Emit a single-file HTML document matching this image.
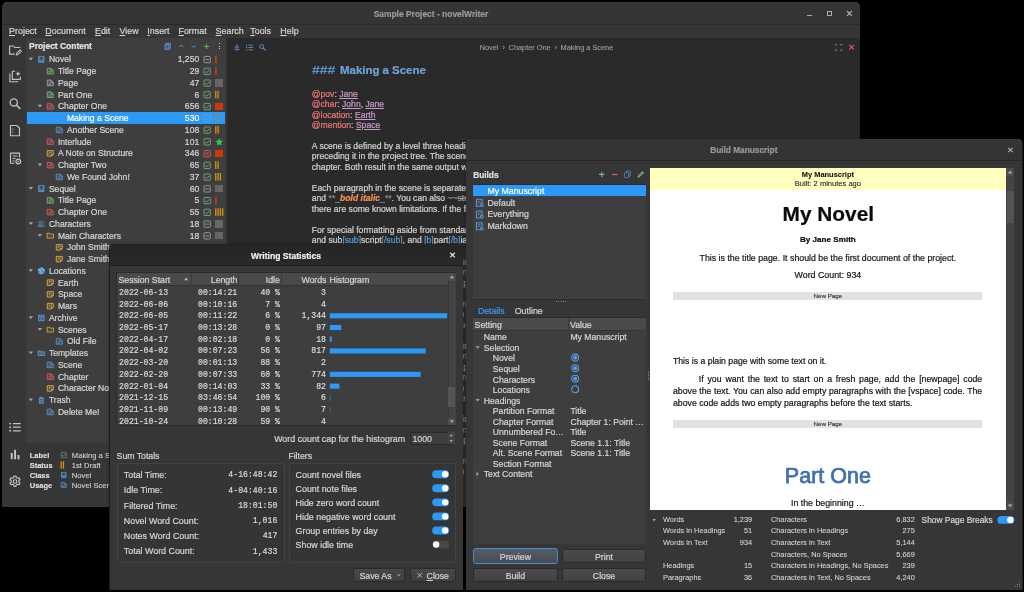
<!DOCTYPE html>
<html><head><meta charset="utf-8"><title>novelWriter</title>
<style>
html,body{margin:0;padding:0;background:#000;}
body{width:1024px;height:592px;overflow:hidden;position:relative;font-family:"Liberation Sans",sans-serif;}
.t{position:absolute;white-space:pre;-webkit-text-stroke:0.2px;}
.g{will-change:transform;}
.r{position:absolute;overflow:hidden;}
.u{text-decoration:underline;}
</style></head><body>
<div class="r" style="left:2px;top:2px;width:858px;height:504.6px;background:#363636;border-radius:5px 5px 0 0;">
<div class="g" style="position:absolute;left:-2px;top:-2px;width:1024px;height:592px;">
<div class="r" style="left:2.00px;top:2.00px;width:858.00px;height:22.30px;background:linear-gradient(#404040 0,#353535 1.300px,#343434 100%);"></div>
<div class="r" style="left:2.00px;top:23.90px;width:858.00px;height:0.90px;background:#2a2a2a;"></div>
<div class="t" style="top:8.10px;line-height:12px;font-size:8.45px;color:#9a9a9a;font-weight:700;letter-spacing:0px;left:231.00px;width:400px;text-align:center;">Sample Project - novelWriter</div>
<div class="r" style="left:807.00px;top:14.60px;width:5.20px;height:1.30px;background:#acacac;"></div>
<div class="r" style="left:826.6px;top:10.6px;width:3.0px;height:3.0px;border:1.5px solid #acacac;"></div>
<svg class="r" style="left:846px;top:10px;" width="8" height="8"><g transform="translate(0.400 0.400) scale(0.6000)"><path d="M1 1l8 8M9 1l-8 8" stroke="#b0b0b0" stroke-width="1.9" fill="none"/></g></svg>
<div class="t" style="top:25.00px;line-height:12px;font-size:8.9px;color:#d6d6d6;letter-spacing:0px;left:9.10px;"><span class="u">P</span>roject</div>
<div class="t" style="top:25.00px;line-height:12px;font-size:8.9px;color:#d6d6d6;letter-spacing:0px;left:45.30px;"><span class="u">D</span>ocument</div>
<div class="t" style="top:25.00px;line-height:12px;font-size:8.9px;color:#d6d6d6;letter-spacing:0px;left:95.00px;"><span class="u">E</span>dit</div>
<div class="t" style="top:25.00px;line-height:12px;font-size:8.9px;color:#d6d6d6;letter-spacing:0px;left:119.50px;"><span class="u">V</span>iew</div>
<div class="t" style="top:25.00px;line-height:12px;font-size:8.9px;color:#d6d6d6;letter-spacing:0px;left:147.30px;"><span class="u">I</span>nsert</div>
<div class="t" style="top:25.00px;line-height:12px;font-size:8.9px;color:#d6d6d6;letter-spacing:0px;left:178.50px;"><span class="u">F</span>ormat</div>
<div class="t" style="top:25.00px;line-height:12px;font-size:8.9px;color:#d6d6d6;letter-spacing:0px;left:215.60px;"><span class="u">S</span>earch</div>
<div class="t" style="top:25.00px;line-height:12px;font-size:8.9px;color:#d6d6d6;letter-spacing:0px;left:250.30px;"><span class="u">T</span>ools</div>
<div class="t" style="top:25.00px;line-height:12px;font-size:8.9px;color:#d6d6d6;letter-spacing:0px;left:280.30px;"><span class="u">H</span>elp</div>
<div class="r" style="left:2.00px;top:37.60px;width:24.40px;height:469.00px;background:#363636;"></div>
<svg class="r" style="left:7px;top:43px;" width="17" height="16"><g transform="translate(0.800 0.000) scale(0.6000)"><path d="M20 8.500V7.500H11.500l-2-2.500H3v13.500h8.500" fill="none" stroke="#c4c4c4" stroke-width="1.900" stroke-linejoin="round"/><path d="M14 20l1-3.200 5.500-5.500 2.200 2.200-5.500 5.500z" fill="none" stroke="#c4c4c4" stroke-width="1.700" stroke-linejoin="round"/></g></svg>
<svg class="r" style="left:7px;top:69px;" width="17" height="16"><g transform="translate(0.800 0.500) scale(0.6000)"><path d="M7.500 3v13.500H21" fill="none" stroke="#c4c4c4" stroke-width="1.900"/><path d="M3.500 6.500V20.500H17.500" fill="none" stroke="#c4c4c4" stroke-width="1.900"/><path d="M7.500 3H12" stroke="#c4c4c4" stroke-width="1.900"/><path d="M21 16.500V12" stroke="#c4c4c4" stroke-width="1.900"/><path d="M17 2.500l1.300 3.200 3.200 1.300-3.200 1.300L17 11.500l-1.300-3.200-3.200-1.300 3.200-1.300z" fill="#c4c4c4"/></g></svg>
<svg class="r" style="left:7px;top:96px;" width="17" height="16"><g transform="translate(0.800 0.400) scale(0.6000)"><circle cx="10" cy="10" r="6" fill="none" stroke="#c4c4c4" stroke-width="2.200"/><path d="M14.500 14.500L21 21" stroke="#c4c4c4" stroke-width="2.600"/></g></svg>
<svg class="r" style="left:7px;top:123px;" width="17" height="16"><g transform="translate(0.800 0.400) scale(0.6000)"><path d="M4.500 3.500h10.500l4.500 4.500v12.500h-15z" fill="none" stroke="#c4c4c4" stroke-width="1.900" stroke-linejoin="round"/><path d="M8.500 9v1.500M8.500 13.500v1.500M8.500 17.500v.5" stroke="#c4c4c4" stroke-width="1.800"/></g></svg>
<svg class="r" style="left:7px;top:151px;" width="17" height="16"><g transform="translate(0.800 0.000) scale(0.6000)"><path d="M19.500 11V3.500h-15v17H11" fill="none" stroke="#c4c4c4" stroke-width="1.900" stroke-linejoin="round"/><path d="M8 8.500h8M8 12.500h5M8 16.500h3" stroke="#c4c4c4" stroke-width="1.700"/><circle cx="17.500" cy="17.500" r="3.900" fill="none" stroke="#c4c4c4" stroke-width="1.900"/><path d="M16 16l3 3M19 16l-3 3" stroke="#c4c4c4" stroke-width="1.400"/></g></svg>
<svg class="r" style="left:7px;top:420px;" width="17" height="16"><g transform="translate(0.800 0.000) scale(0.6000)"><path d="M8.500 6h13M8.500 12h13M8.500 18h13" stroke="#c4c4c4" stroke-width="2.200"/><circle cx="4" cy="6" r="1.600" fill="#c4c4c4"/><circle cx="4" cy="12" r="1.600" fill="#c4c4c4"/><circle cx="4" cy="18" r="1.600" fill="#c4c4c4"/></g></svg>
<svg class="r" style="left:7px;top:447px;" width="17" height="16"><g transform="translate(0.800 0.300) scale(0.6000)"><path d="M5 9.500h3.200V20H5zM10.500 4h3.200v16h-3.200zM16.200 13h3.200v7h-3.200z" fill="#c4c4c4"/></g></svg>
<svg class="r" style="left:7px;top:474px;" width="17" height="16"><g transform="translate(0.800 0.300) scale(0.6000)"><circle cx="12" cy="12" r="3" fill="none" stroke="#c4c4c4" stroke-width="1.900"/><path d="M10.300 2.800h3.400l.5 2.700 1.900 1.100 2.600-.9 1.700 2.900-2.100 1.800v2.200l2.100 1.800-1.700 2.900-2.600-.9-1.900 1.100-.5 2.700h-3.400l-.5-2.700-1.900-1.100-2.600.9-1.700-2.900 2.100-1.800v-2.200L3.600 8.600l1.700-2.900 2.600.9 1.900-1.100z" fill="none" stroke="#c4c4c4" stroke-width="1.900" stroke-linejoin="round"/></g></svg>
<div class="r" style="left:26.40px;top:37.60px;width:199.80px;height:405.60px;background:#3e3e3e;"></div>
<div class="t" style="top:40.30px;line-height:12px;font-size:8.55px;color:#e4e4e4;font-weight:700;letter-spacing:-0.05px;left:29.00px;">Project Content</div>
<svg class="r" style="left:163px;top:41px;" width="10" height="11"><g transform="translate(0.400 1.050) scale(0.3542)"><path d="M8 5.500V3.500h11.500V18c0 1.400-1 2.500-2.500 2.500" fill="none" stroke="#5f9ad6" stroke-width="2.600"/><path d="M4.500 6.500h11v14h-11z" fill="#5f9ad6" fill-opacity=".35" stroke="#5f9ad6" stroke-width="2.600"/></g></svg>
<svg class="r" style="left:178px;top:43px;" width="7" height="7"><g transform="translate(0.200 0.614) scale(0.4143)"><path d="M2 8.500l5-5 5 5" fill="none" stroke="#5f9ad6" stroke-width="2.200"/></g></svg>
<svg class="r" style="left:190px;top:44px;" width="8" height="6"><g transform="translate(0.800 0.014) scale(0.4143)"><path d="M2 3.500l5 5 5-5" fill="none" stroke="#5f9ad6" stroke-width="2.200"/></g></svg>
<svg class="r" style="left:203px;top:43px;" width="8" height="8"><g transform="translate(0.600 0.500) scale(0.4286)"><path d="M7 1v12M1 7h12" stroke="#5fae68" stroke-width="2.700"/></g></svg>
<div class="r" style="left:218.80px;top:43.10px;width:1.30px;height:1.30px;background:#c8c8c8;"></div>
<div class="r" style="left:218.80px;top:45.50px;width:1.30px;height:1.30px;background:#c8c8c8;"></div>
<div class="r" style="left:218.80px;top:47.90px;width:1.30px;height:1.30px;background:#c8c8c8;"></div>
<svg class="r" style="left:28px;top:57px;" width="7" height="5"><g transform="translate(0.700 0.780) scale(0.4400)"><path d="M0 0h10L5 6z" fill="#a4a4a4"/></g></svg>
<svg class="r" style="left:37px;top:55px;" width="10" height="10"><g transform="translate(0.150 0.250) scale(0.3458)"><path d="M4.500 3.500h15v17h-15z" fill="#5b98d4" fill-opacity=".5" stroke="#5b98d4" stroke-width="2.600" stroke-linejoin="round"/><path d="M10 4.500h4.500v7.500H10z" fill="#2c3540"/><path d="M4.500 17h15" stroke="#5b98d4" stroke-width="1.600"/></g></svg>
<div class="t" style="top:53.40px;line-height:12px;font-size:8.6px;color:#d6d6d6;letter-spacing:0px;left:48.90px;">Novel</div>
<div class="t" style="top:53.40px;line-height:12px;font-size:8.6px;color:#d6d6d6;letter-spacing:0px;right:824.80px;">1,250</div>
<svg class="r" style="left:202px;top:55px;" width="11" height="11"><g transform="translate(0.700 0.150) scale(0.3708)"><rect x="3.500" y="3.500" width="17" height="17" rx="2" fill="none" stroke="#a0a0a0" stroke-width="2.400"/><path d="M7 12h10" stroke="#a0a0a0" stroke-width="2.400"/></g></svg>
<svg class="r" style="left:215px;top:55px;" width="3" height="10"><g transform="translate(0.100 0.500) scale(1.0000)"><rect x="0" y="0" width="1.6" height="7.6" fill="#c8400a"/></g></svg>
<svg class="r" style="left:46px;top:67px;" width="10" height="10"><g transform="translate(0.150 0.000) scale(0.3458)"><path d="M3.200 4h11l6.600 6v10H3.200z" fill="#74bf7e" fill-opacity=".22" stroke="#74bf7e" stroke-width="2.400" stroke-linejoin="round"/><path d="M13.800 4.500v6H20.500" fill="none" stroke="#74bf7e" stroke-width="1.900"/><path d="M7.500 13h8M7.500 16.800h6" stroke="#74bf7e" stroke-width="1.700"/></g></svg>
<div class="t" style="top:65.15px;line-height:12px;font-size:8.6px;color:#d6d6d6;letter-spacing:0px;left:57.90px;">Title Page</div>
<div class="t" style="top:65.15px;line-height:12px;font-size:8.6px;color:#d6d6d6;letter-spacing:0px;right:824.80px;">29</div>
<svg class="r" style="left:202px;top:66px;" width="11" height="11"><g transform="translate(0.700 0.900) scale(0.3708)"><rect x="3.500" y="3.500" width="17" height="17" rx="2" fill="none" stroke="#86c88e" stroke-width="1.900"/><path d="M7 12.500l3.500 3.500L17.500 8.500" fill="none" stroke="#86c88e" stroke-width="2"/></g></svg>
<svg class="r" style="left:215px;top:67px;" width="3" height="9"><g transform="translate(0.100 0.250) scale(1.0000)"><rect x="0" y="0" width="1.6" height="7.6" fill="#c8400a"/></g></svg>
<svg class="r" style="left:46px;top:78px;" width="10" height="11"><g transform="translate(0.150 0.750) scale(0.3458)"><path d="M3.200 4h11l6.600 6v10H3.200z" fill="#a8a8a8" fill-opacity=".22" stroke="#a8a8a8" stroke-width="2.400" stroke-linejoin="round"/><path d="M13.800 4.500v6H20.500" fill="none" stroke="#a8a8a8" stroke-width="1.900"/><path d="M7.500 13h8M7.500 16.800h6" stroke="#a8a8a8" stroke-width="1.700"/></g></svg>
<div class="t" style="top:76.90px;line-height:12px;font-size:8.6px;color:#d6d6d6;letter-spacing:0px;left:57.90px;">Page</div>
<div class="t" style="top:76.90px;line-height:12px;font-size:8.6px;color:#d6d6d6;letter-spacing:0px;right:824.80px;">47</div>
<svg class="r" style="left:202px;top:78px;" width="11" height="11"><g transform="translate(0.700 0.650) scale(0.3708)"><rect x="3.500" y="3.500" width="17" height="17" rx="2" fill="none" stroke="#86c88e" stroke-width="1.900"/><path d="M7 12.500l3.500 3.500L17.500 8.500" fill="none" stroke="#86c88e" stroke-width="2"/></g></svg>
<div class="r" style="left:215.10px;top:79.00px;width:8.40px;height:7.60px;background:#666666;"></div>
<svg class="r" style="left:46px;top:90px;" width="10" height="10"><g transform="translate(0.150 0.500) scale(0.3458)"><path d="M3.200 4h11l6.600 6v10H3.200z" fill="#74bf7e" fill-opacity=".22" stroke="#74bf7e" stroke-width="2.400" stroke-linejoin="round"/><path d="M13.800 4.500v6H20.500" fill="none" stroke="#74bf7e" stroke-width="1.900"/><path d="M7.500 13h8M7.500 16.800h6" stroke="#74bf7e" stroke-width="1.700"/></g></svg>
<div class="t" style="top:88.65px;line-height:12px;font-size:8.6px;color:#d6d6d6;letter-spacing:0px;left:57.90px;">Part One</div>
<div class="t" style="top:88.65px;line-height:12px;font-size:8.6px;color:#d6d6d6;letter-spacing:0px;right:824.80px;">6</div>
<svg class="r" style="left:202px;top:90px;" width="11" height="11"><g transform="translate(0.700 0.400) scale(0.3708)"><rect x="3.500" y="3.500" width="17" height="17" rx="2" fill="none" stroke="#86c88e" stroke-width="1.900"/><path d="M7 12.500l3.500 3.500L17.500 8.500" fill="none" stroke="#86c88e" stroke-width="2"/></g></svg>
<svg class="r" style="left:215px;top:90px;" width="3" height="10"><g transform="translate(0.100 0.750) scale(1.0000)"><rect x="0" y="0" width="1.3" height="7.6" fill="#d8920c"/></g></svg>
<svg class="r" style="left:217px;top:90px;" width="3" height="10"><g transform="translate(0.420 0.750) scale(1.0000)"><rect x="0" y="0" width="1.3" height="7.6" fill="#d8920c"/></g></svg>
<svg class="r" style="left:37px;top:104px;" width="7" height="5"><g transform="translate(0.700 0.780) scale(0.4400)"><path d="M0 0h10L5 6z" fill="#a4a4a4"/></g></svg>
<svg class="r" style="left:46px;top:102px;" width="10" height="10"><g transform="translate(0.150 0.250) scale(0.3458)"><path d="M3.200 4h11l6.600 6v10H3.200z" fill="#dd5a64" fill-opacity=".22" stroke="#dd5a64" stroke-width="2.400" stroke-linejoin="round"/><path d="M13.800 4.500v6H20.500" fill="none" stroke="#dd5a64" stroke-width="1.900"/><path d="M7.500 13h8M7.500 16.800h6" stroke="#dd5a64" stroke-width="1.700"/></g></svg>
<div class="t" style="top:100.40px;line-height:12px;font-size:8.6px;color:#d6d6d6;letter-spacing:0px;left:57.90px;">Chapter One</div>
<div class="t" style="top:100.40px;line-height:12px;font-size:8.6px;color:#d6d6d6;letter-spacing:0px;right:824.80px;">656</div>
<svg class="r" style="left:202px;top:102px;" width="11" height="11"><g transform="translate(0.700 0.150) scale(0.3708)"><rect x="3.500" y="3.500" width="17" height="17" rx="2" fill="none" stroke="#86c88e" stroke-width="1.900"/><path d="M7 12.500l3.500 3.500L17.500 8.500" fill="none" stroke="#86c88e" stroke-width="2"/></g></svg>
<div class="r" style="left:215.10px;top:102.50px;width:8.40px;height:7.60px;background:#d23508;"></div>
<div class="r" style="left:26.80px;top:112.45px;width:198.60px;height:11.10px;background:#2c98f7;"></div>
<svg class="r" style="left:55px;top:114px;opacity:.22;" width="10" height="10"><g transform="translate(0.150 0.000) scale(0.3458)"><path d="M3.200 4h11l6.600 6v10H3.200z" fill="#5b98d4" fill-opacity=".22" stroke="#5b98d4" stroke-width="2.400" stroke-linejoin="round"/><path d="M13.800 4.500v6H20.500" fill="none" stroke="#5b98d4" stroke-width="1.900"/><path d="M7.500 13h8M7.500 16.800h6" stroke="#5b98d4" stroke-width="1.700"/></g></svg>
<div class="t" style="top:112.15px;line-height:12px;font-size:8.6px;color:#ffffff;letter-spacing:0px;left:66.90px;">Making a Scene</div>
<div class="t" style="top:112.15px;line-height:12px;font-size:8.6px;color:#ffffff;letter-spacing:0px;right:824.80px;">530</div>
<svg class="r" style="left:202px;top:113px;" width="11" height="11"><g transform="translate(0.700 0.900) scale(0.3708)"><rect x="3.500" y="3.500" width="17" height="17" rx="2" fill="none" stroke="#5fb0c8" stroke-width="1.900"/><path d="M7 12.500l3.500 3.500L17.500 8.500" fill="none" stroke="#5fb0c8" stroke-width="2"/></g></svg>
<svg class="r" style="left:215px;top:114px;" width="3" height="9"><g transform="translate(0.100 0.250) scale(1.0000)"><rect x="0" y="0" width="1.3" height="7.6" fill="#8a8c5a"/></g></svg>
<svg class="r" style="left:217px;top:114px;" width="3" height="9"><g transform="translate(0.420 0.250) scale(1.0000)"><rect x="0" y="0" width="1.3" height="7.6" fill="#8a8c5a"/></g></svg>
<svg class="r" style="left:55px;top:125px;" width="10" height="11"><g transform="translate(0.150 0.750) scale(0.3458)"><path d="M3.200 4h11l6.600 6v10H3.200z" fill="#5b98d4" fill-opacity=".22" stroke="#5b98d4" stroke-width="2.400" stroke-linejoin="round"/><path d="M13.800 4.500v6H20.500" fill="none" stroke="#5b98d4" stroke-width="1.900"/><path d="M7.500 13h8M7.500 16.800h6" stroke="#5b98d4" stroke-width="1.700"/></g></svg>
<div class="t" style="top:123.90px;line-height:12px;font-size:8.6px;color:#d6d6d6;letter-spacing:0px;left:66.90px;">Another Scene</div>
<div class="t" style="top:123.90px;line-height:12px;font-size:8.6px;color:#d6d6d6;letter-spacing:0px;right:824.80px;">108</div>
<svg class="r" style="left:202px;top:125px;" width="11" height="11"><g transform="translate(0.700 0.650) scale(0.3708)"><rect x="3.500" y="3.500" width="17" height="17" rx="2" fill="none" stroke="#86c88e" stroke-width="1.900"/><path d="M7 12.500l3.500 3.500L17.500 8.500" fill="none" stroke="#86c88e" stroke-width="2"/></g></svg>
<svg class="r" style="left:215px;top:126px;" width="3" height="9"><g transform="translate(0.100 0.000) scale(1.0000)"><rect x="0" y="0" width="1.3" height="7.6" fill="#d8920c"/></g></svg>
<svg class="r" style="left:217px;top:126px;" width="3" height="9"><g transform="translate(0.420 0.000) scale(1.0000)"><rect x="0" y="0" width="1.3" height="7.6" fill="#d8920c"/></g></svg>
<svg class="r" style="left:46px;top:137px;" width="10" height="10"><g transform="translate(0.150 0.500) scale(0.3458)"><path d="M3.200 4h11l6.600 6v10H3.200z" fill="#dd5a64" fill-opacity=".22" stroke="#dd5a64" stroke-width="2.400" stroke-linejoin="round"/><path d="M13.800 4.500v6H20.500" fill="none" stroke="#dd5a64" stroke-width="1.900"/><path d="M7.500 13h8M7.500 16.800h6" stroke="#dd5a64" stroke-width="1.700"/></g></svg>
<div class="t" style="top:135.65px;line-height:12px;font-size:8.6px;color:#d6d6d6;letter-spacing:0px;left:57.90px;">Interlude</div>
<div class="t" style="top:135.65px;line-height:12px;font-size:8.6px;color:#d6d6d6;letter-spacing:0px;right:824.80px;">101</div>
<svg class="r" style="left:202px;top:137px;" width="11" height="11"><g transform="translate(0.700 0.400) scale(0.3708)"><rect x="3.500" y="3.500" width="17" height="17" rx="2" fill="none" stroke="#86c88e" stroke-width="1.900"/><path d="M7 12.500l3.500 3.500L17.500 8.500" fill="none" stroke="#86c88e" stroke-width="2"/></g></svg>
<svg class="r" style="left:214px;top:137px;" width="11" height="11"><g transform="translate(0.700 0.450) scale(0.3750)"><path d="M12 1.500l3.200 6.800 7.300.9-5.400 5 1.400 7.300L12 17.900 5.500 21.500l1.400-7.300-5.400-5 7.300-.9z" fill="#3fc04a"/></g></svg>
<svg class="r" style="left:46px;top:149px;" width="10" height="10"><g transform="translate(0.150 0.250) scale(0.3458)"><path d="M3.200 4h17.600v10l-6 6H3.200z" fill="#ecb442" fill-opacity=".14" stroke="#ecb442" stroke-width="2.400" stroke-linejoin="round"/><path d="M20.800 14.500l-5.500 5.500v-5.500z" fill="#ecb442" stroke="#ecb442" stroke-width="1" stroke-linejoin="round"/><path d="M7.300 8.800h9.500M7.300 12.800h5" stroke="#ecb442" stroke-width="1.700"/></g></svg>
<div class="t" style="top:147.40px;line-height:12px;font-size:8.6px;color:#d6d6d6;letter-spacing:0px;left:57.90px;">A Note on Structure</div>
<div class="t" style="top:147.40px;line-height:12px;font-size:8.6px;color:#d6d6d6;letter-spacing:0px;right:824.80px;">346</div>
<svg class="r" style="left:202px;top:149px;" width="11" height="11"><g transform="translate(0.700 0.150) scale(0.3708)"><rect x="3.500" y="3.500" width="17" height="17" rx="2" fill="none" stroke="#e2525c" stroke-width="2.600"/><path d="M8 8l8 8M16 8l-8 8" stroke="#e2525c" stroke-width="2.400"/></g></svg>
<div class="r" style="left:215.10px;top:149.50px;width:8.40px;height:7.60px;background:#d23508;"></div>
<svg class="r" style="left:37px;top:163px;" width="7" height="5"><g transform="translate(0.700 0.530) scale(0.4400)"><path d="M0 0h10L5 6z" fill="#a4a4a4"/></g></svg>
<svg class="r" style="left:46px;top:161px;" width="10" height="10"><g transform="translate(0.150 0.000) scale(0.3458)"><path d="M3.200 4h11l6.600 6v10H3.200z" fill="#dd5a64" fill-opacity=".22" stroke="#dd5a64" stroke-width="2.400" stroke-linejoin="round"/><path d="M13.800 4.500v6H20.500" fill="none" stroke="#dd5a64" stroke-width="1.900"/><path d="M7.500 13h8M7.500 16.800h6" stroke="#dd5a64" stroke-width="1.700"/></g></svg>
<div class="t" style="top:159.15px;line-height:12px;font-size:8.6px;color:#d6d6d6;letter-spacing:0px;left:57.90px;">Chapter Two</div>
<div class="t" style="top:159.15px;line-height:12px;font-size:8.6px;color:#d6d6d6;letter-spacing:0px;right:824.80px;">65</div>
<svg class="r" style="left:202px;top:160px;" width="11" height="11"><g transform="translate(0.700 0.900) scale(0.3708)"><rect x="3.500" y="3.500" width="17" height="17" rx="2" fill="none" stroke="#86c88e" stroke-width="1.900"/><path d="M7 12.500l3.500 3.500L17.500 8.500" fill="none" stroke="#86c88e" stroke-width="2"/></g></svg>
<svg class="r" style="left:215px;top:161px;" width="3" height="9"><g transform="translate(0.100 0.250) scale(1.0000)"><rect x="0" y="0" width="1.3" height="7.6" fill="#d8920c"/></g></svg>
<svg class="r" style="left:217px;top:161px;" width="3" height="9"><g transform="translate(0.420 0.250) scale(1.0000)"><rect x="0" y="0" width="1.3" height="7.6" fill="#d8920c"/></g></svg>
<svg class="r" style="left:55px;top:172px;" width="10" height="11"><g transform="translate(0.150 0.750) scale(0.3458)"><path d="M3.200 4h11l6.600 6v10H3.200z" fill="#5b98d4" fill-opacity=".22" stroke="#5b98d4" stroke-width="2.400" stroke-linejoin="round"/><path d="M13.800 4.500v6H20.500" fill="none" stroke="#5b98d4" stroke-width="1.900"/><path d="M7.500 13h8M7.500 16.800h6" stroke="#5b98d4" stroke-width="1.700"/></g></svg>
<div class="t" style="top:170.90px;line-height:12px;font-size:8.6px;color:#d6d6d6;letter-spacing:0px;left:66.90px;">We Found John!</div>
<div class="t" style="top:170.90px;line-height:12px;font-size:8.6px;color:#d6d6d6;letter-spacing:0px;right:824.80px;">37</div>
<svg class="r" style="left:202px;top:172px;" width="11" height="11"><g transform="translate(0.700 0.650) scale(0.3708)"><rect x="3.500" y="3.500" width="17" height="17" rx="2" fill="none" stroke="#86c88e" stroke-width="1.900"/><path d="M7 12.500l3.500 3.500L17.500 8.500" fill="none" stroke="#86c88e" stroke-width="2"/></g></svg>
<svg class="r" style="left:215px;top:173px;" width="3" height="9"><g transform="translate(0.100 0.000) scale(1.0000)"><rect x="0" y="0" width="1.3" height="7.6" fill="#d8920c"/></g></svg>
<svg class="r" style="left:217px;top:173px;" width="3" height="9"><g transform="translate(0.420 0.000) scale(1.0000)"><rect x="0" y="0" width="1.3" height="7.6" fill="#d8920c"/></g></svg>
<svg class="r" style="left:219px;top:173px;" width="4" height="9"><g transform="translate(0.740 0.000) scale(1.0000)"><rect x="0" y="0" width="1.3" height="7.6" fill="#d8920c"/></g></svg>
<svg class="r" style="left:28px;top:186px;" width="7" height="5"><g transform="translate(0.700 1.030) scale(0.4400)"><path d="M0 0h10L5 6z" fill="#a4a4a4"/></g></svg>
<svg class="r" style="left:37px;top:184px;" width="10" height="10"><g transform="translate(0.150 0.500) scale(0.3458)"><path d="M4.500 3.500h15v17h-15z" fill="#5b98d4" fill-opacity=".5" stroke="#5b98d4" stroke-width="2.600" stroke-linejoin="round"/><path d="M10 4.500h4.500v7.500H10z" fill="#2c3540"/><path d="M4.500 17h15" stroke="#5b98d4" stroke-width="1.600"/></g></svg>
<div class="t" style="top:182.65px;line-height:12px;font-size:8.6px;color:#d6d6d6;letter-spacing:0px;left:48.90px;">Sequel</div>
<div class="t" style="top:182.65px;line-height:12px;font-size:8.6px;color:#d6d6d6;letter-spacing:0px;right:824.80px;">60</div>
<svg class="r" style="left:202px;top:184px;" width="11" height="11"><g transform="translate(0.700 0.400) scale(0.3708)"><rect x="3.500" y="3.500" width="17" height="17" rx="2" fill="none" stroke="#a0a0a0" stroke-width="2.400"/><path d="M7 12h10" stroke="#a0a0a0" stroke-width="2.400"/></g></svg>
<div class="r" style="left:215.10px;top:184.75px;width:8.40px;height:7.60px;background:#666666;"></div>
<svg class="r" style="left:46px;top:196px;" width="10" height="10"><g transform="translate(0.150 0.250) scale(0.3458)"><path d="M3.200 4h11l6.600 6v10H3.200z" fill="#74bf7e" fill-opacity=".22" stroke="#74bf7e" stroke-width="2.400" stroke-linejoin="round"/><path d="M13.800 4.500v6H20.500" fill="none" stroke="#74bf7e" stroke-width="1.900"/><path d="M7.500 13h8M7.500 16.800h6" stroke="#74bf7e" stroke-width="1.700"/></g></svg>
<div class="t" style="top:194.40px;line-height:12px;font-size:8.6px;color:#d6d6d6;letter-spacing:0px;left:57.90px;">Title Page</div>
<div class="t" style="top:194.40px;line-height:12px;font-size:8.6px;color:#d6d6d6;letter-spacing:0px;right:824.80px;">5</div>
<svg class="r" style="left:202px;top:196px;" width="11" height="11"><g transform="translate(0.700 0.150) scale(0.3708)"><rect x="3.500" y="3.500" width="17" height="17" rx="2" fill="none" stroke="#86c88e" stroke-width="1.900"/><path d="M7 12.500l3.500 3.500L17.500 8.500" fill="none" stroke="#86c88e" stroke-width="2"/></g></svg>
<svg class="r" style="left:215px;top:196px;" width="3" height="10"><g transform="translate(0.100 0.500) scale(1.0000)"><rect x="0" y="0" width="1.6" height="7.6" fill="#c8400a"/></g></svg>
<svg class="r" style="left:46px;top:208px;" width="10" height="10"><g transform="translate(0.150 0.000) scale(0.3458)"><path d="M3.200 4h11l6.600 6v10H3.200z" fill="#dd5a64" fill-opacity=".22" stroke="#dd5a64" stroke-width="2.400" stroke-linejoin="round"/><path d="M13.800 4.500v6H20.500" fill="none" stroke="#dd5a64" stroke-width="1.900"/><path d="M7.500 13h8M7.500 16.800h6" stroke="#dd5a64" stroke-width="1.700"/></g></svg>
<div class="t" style="top:206.15px;line-height:12px;font-size:8.6px;color:#d6d6d6;letter-spacing:0px;left:57.90px;">Chapter One</div>
<div class="t" style="top:206.15px;line-height:12px;font-size:8.6px;color:#d6d6d6;letter-spacing:0px;right:824.80px;">55</div>
<svg class="r" style="left:202px;top:207px;" width="11" height="11"><g transform="translate(0.700 0.900) scale(0.3708)"><rect x="3.500" y="3.500" width="17" height="17" rx="2" fill="none" stroke="#86c88e" stroke-width="1.900"/><path d="M7 12.500l3.500 3.500L17.500 8.500" fill="none" stroke="#86c88e" stroke-width="2"/></g></svg>
<svg class="r" style="left:215px;top:208px;" width="3" height="9"><g transform="translate(0.100 0.250) scale(1.0000)"><rect x="0" y="0" width="1.3" height="7.6" fill="#d8920c"/></g></svg>
<svg class="r" style="left:217px;top:208px;" width="3" height="9"><g transform="translate(0.420 0.250) scale(1.0000)"><rect x="0" y="0" width="1.3" height="7.6" fill="#d8920c"/></g></svg>
<svg class="r" style="left:219px;top:208px;" width="4" height="9"><g transform="translate(0.740 0.250) scale(1.0000)"><rect x="0" y="0" width="1.3" height="7.6" fill="#d8920c"/></g></svg>
<svg class="r" style="left:222px;top:208px;" width="3" height="9"><g transform="translate(0.060 0.250) scale(1.0000)"><rect x="0" y="0" width="1.3" height="7.6" fill="#d8920c"/></g></svg>
<svg class="r" style="left:28px;top:222px;" width="7" height="4"><g transform="translate(0.700 0.280) scale(0.4400)"><path d="M0 0h10L5 6z" fill="#a4a4a4"/></g></svg>
<svg class="r" style="left:37px;top:219px;" width="10" height="11"><g transform="translate(0.150 0.750) scale(0.3458)"><circle cx="9" cy="7.500" r="3.300" fill="none" stroke="#5b98d4" stroke-width="2.200"/><path d="M2.200 19.500v-1.500c0-2.600 4.200-4 6.800-4s6.800 1.400 6.800 4v1.500z" fill="#5b98d4" fill-opacity=".3" stroke="#5b98d4" stroke-width="2.200" stroke-linejoin="round"/><path d="M15.500 4.500c1.800 0 3.200 1.400 3.200 3.200s-1.400 3.200-3.200 3.200" fill="none" stroke="#5b98d4" stroke-width="2.200"/><path d="M18.500 14.500c1.800.600 3.300 1.700 3.300 3.500v1.500h-2.500" fill="none" stroke="#5b98d4" stroke-width="2.200"/></g></svg>
<div class="t" style="top:217.90px;line-height:12px;font-size:8.6px;color:#d6d6d6;letter-spacing:0px;left:48.90px;">Characters</div>
<div class="t" style="top:217.90px;line-height:12px;font-size:8.6px;color:#d6d6d6;letter-spacing:0px;right:824.80px;">18</div>
<svg class="r" style="left:202px;top:219px;" width="11" height="11"><g transform="translate(0.700 0.650) scale(0.3708)"><rect x="3.500" y="3.500" width="17" height="17" rx="2" fill="none" stroke="#a0a0a0" stroke-width="2.400"/><path d="M7 12h10" stroke="#a0a0a0" stroke-width="2.400"/></g></svg>
<div class="r" style="left:215.10px;top:220.00px;width:8.40px;height:7.60px;background:#666666;"></div>
<svg class="r" style="left:37px;top:233px;" width="7" height="5"><g transform="translate(0.700 1.030) scale(0.4400)"><path d="M0 0h10L5 6z" fill="#a4a4a4"/></g></svg>
<svg class="r" style="left:46px;top:231px;" width="10" height="10"><g transform="translate(0.150 0.500) scale(0.3458)"><path d="M2.800 5h6.700l2 2.500h9.700v11.500H2.800z" fill="#ecb442" fill-opacity=".08" stroke="#ecb442" stroke-width="2.300" stroke-linejoin="round"/></g></svg>
<div class="t" style="top:229.65px;line-height:12px;font-size:8.6px;color:#d6d6d6;letter-spacing:0px;left:57.90px;">Main Characters</div>
<div class="t" style="top:229.65px;line-height:12px;font-size:8.6px;color:#d6d6d6;letter-spacing:0px;right:824.80px;">18</div>
<svg class="r" style="left:202px;top:231px;" width="11" height="11"><g transform="translate(0.700 0.400) scale(0.3708)"><rect x="3.500" y="3.500" width="17" height="17" rx="2" fill="none" stroke="#a0a0a0" stroke-width="2.400"/><path d="M7 12h10" stroke="#a0a0a0" stroke-width="2.400"/></g></svg>
<div class="r" style="left:215.10px;top:231.75px;width:8.40px;height:7.60px;background:#666666;"></div>
<svg class="r" style="left:55px;top:243px;" width="10" height="10"><g transform="translate(0.150 0.250) scale(0.3458)"><path d="M3.200 4h17.600v10l-6 6H3.200z" fill="#ecb442" fill-opacity=".14" stroke="#ecb442" stroke-width="2.400" stroke-linejoin="round"/><path d="M20.800 14.500l-5.500 5.500v-5.500z" fill="#ecb442" stroke="#ecb442" stroke-width="1" stroke-linejoin="round"/><path d="M7.300 8.800h9.500M7.300 12.800h5" stroke="#ecb442" stroke-width="1.700"/></g></svg>
<div class="t" style="top:241.40px;line-height:12px;font-size:8.6px;color:#d6d6d6;letter-spacing:0px;left:66.90px;">John Smith</div>
<div class="t" style="top:241.40px;line-height:12px;font-size:8.6px;color:#d6d6d6;letter-spacing:0px;right:824.80px;">9</div>
<svg class="r" style="left:202px;top:243px;" width="11" height="11"><g transform="translate(0.700 0.150) scale(0.3708)"><rect x="3.500" y="3.500" width="17" height="17" rx="2" fill="none" stroke="#86c88e" stroke-width="1.900"/><path d="M7 12.500l3.500 3.500L17.500 8.500" fill="none" stroke="#86c88e" stroke-width="2"/></g></svg>
<div class="r" style="left:215.10px;top:243.50px;width:8.40px;height:7.60px;background:#b040c0;"></div>
<svg class="r" style="left:55px;top:254px;" width="10" height="11"><g transform="translate(0.150 1.000) scale(0.3458)"><path d="M3.200 4h17.600v10l-6 6H3.200z" fill="#ecb442" fill-opacity=".14" stroke="#ecb442" stroke-width="2.400" stroke-linejoin="round"/><path d="M20.800 14.500l-5.500 5.500v-5.500z" fill="#ecb442" stroke="#ecb442" stroke-width="1" stroke-linejoin="round"/><path d="M7.300 8.800h9.500M7.300 12.800h5" stroke="#ecb442" stroke-width="1.700"/></g></svg>
<div class="t" style="top:253.15px;line-height:12px;font-size:8.6px;color:#d6d6d6;letter-spacing:0px;left:66.90px;">Jane Smith</div>
<div class="t" style="top:253.15px;line-height:12px;font-size:8.6px;color:#d6d6d6;letter-spacing:0px;right:824.80px;">9</div>
<svg class="r" style="left:202px;top:254px;" width="11" height="11"><g transform="translate(0.700 0.900) scale(0.3708)"><rect x="3.500" y="3.500" width="17" height="17" rx="2" fill="none" stroke="#86c88e" stroke-width="1.900"/><path d="M7 12.500l3.500 3.500L17.500 8.500" fill="none" stroke="#86c88e" stroke-width="2"/></g></svg>
<div class="r" style="left:215.10px;top:255.25px;width:8.40px;height:7.60px;background:#b040c0;"></div>
<svg class="r" style="left:28px;top:269px;" width="7" height="4"><g transform="translate(0.700 0.280) scale(0.4400)"><path d="M0 0h10L5 6z" fill="#a4a4a4"/></g></svg>
<svg class="r" style="left:37px;top:266px;" width="10" height="11"><g transform="translate(0.150 0.750) scale(0.3458)"><circle cx="12" cy="12" r="9.200" fill="#4c8cd2" stroke="#5b98d4" stroke-width="1.600"/><path d="M4 8.500c2.500.500 4.500 0 6 1.500s-.500 3 1.500 4 .500 3.500-.500 6M13.500 3.500c-.500 2.500 1.500 3 3.500 4s1.500 3.500 4 3.500" fill="none" stroke="#b4d6f6" stroke-width="2.600" stroke-linecap="round"/></g></svg>
<div class="t" style="top:264.90px;line-height:12px;font-size:8.6px;color:#d6d6d6;letter-spacing:0px;left:48.90px;">Locations</div>
<svg class="r" style="left:46px;top:278px;" width="10" height="10"><g transform="translate(0.150 0.500) scale(0.3458)"><path d="M3.200 4h17.600v10l-6 6H3.200z" fill="#ecb442" fill-opacity=".14" stroke="#ecb442" stroke-width="2.400" stroke-linejoin="round"/><path d="M20.800 14.500l-5.500 5.500v-5.500z" fill="#ecb442" stroke="#ecb442" stroke-width="1" stroke-linejoin="round"/><path d="M7.300 8.800h9.500M7.300 12.800h5" stroke="#ecb442" stroke-width="1.700"/></g></svg>
<div class="t" style="top:276.65px;line-height:12px;font-size:8.6px;color:#d6d6d6;letter-spacing:0px;left:57.90px;">Earth</div>
<svg class="r" style="left:46px;top:290px;" width="10" height="10"><g transform="translate(0.150 0.250) scale(0.3458)"><path d="M3.200 4h17.600v10l-6 6H3.200z" fill="#ecb442" fill-opacity=".14" stroke="#ecb442" stroke-width="2.400" stroke-linejoin="round"/><path d="M20.800 14.500l-5.500 5.500v-5.500z" fill="#ecb442" stroke="#ecb442" stroke-width="1" stroke-linejoin="round"/><path d="M7.300 8.800h9.500M7.300 12.800h5" stroke="#ecb442" stroke-width="1.700"/></g></svg>
<div class="t" style="top:288.40px;line-height:12px;font-size:8.6px;color:#d6d6d6;letter-spacing:0px;left:57.90px;">Space</div>
<svg class="r" style="left:46px;top:302px;" width="10" height="10"><g transform="translate(0.150 0.000) scale(0.3458)"><path d="M3.200 4h17.600v10l-6 6H3.200z" fill="#ecb442" fill-opacity=".14" stroke="#ecb442" stroke-width="2.400" stroke-linejoin="round"/><path d="M20.800 14.500l-5.500 5.500v-5.500z" fill="#ecb442" stroke="#ecb442" stroke-width="1" stroke-linejoin="round"/><path d="M7.300 8.800h9.500M7.300 12.800h5" stroke="#ecb442" stroke-width="1.700"/></g></svg>
<div class="t" style="top:300.15px;line-height:12px;font-size:8.6px;color:#d6d6d6;letter-spacing:0px;left:57.90px;">Mars</div>
<svg class="r" style="left:28px;top:316px;" width="7" height="4"><g transform="translate(0.700 0.280) scale(0.4400)"><path d="M0 0h10L5 6z" fill="#a4a4a4"/></g></svg>
<svg class="r" style="left:37px;top:313px;" width="10" height="11"><g transform="translate(0.150 0.750) scale(0.3458)"><path d="M4 4h16v16H4z" fill="#5b98d4" fill-opacity=".3" stroke="#5b98d4" stroke-width="2.6" stroke-linejoin="round"/><path d="M4 8.500h16" stroke="#5b98d4" stroke-width="2.2"/><path d="M12 10.500v6M8.800 14l3.200 3.200 3.200-3.200" fill="none" stroke="#5b98d4" stroke-width="2.2"/></g></svg>
<div class="t" style="top:311.90px;line-height:12px;font-size:8.6px;color:#d6d6d6;letter-spacing:0px;left:48.90px;">Archive</div>
<svg class="r" style="left:37px;top:327px;" width="7" height="5"><g transform="translate(0.700 1.030) scale(0.4400)"><path d="M0 0h10L5 6z" fill="#a4a4a4"/></g></svg>
<svg class="r" style="left:46px;top:325px;" width="10" height="10"><g transform="translate(0.150 0.500) scale(0.3458)"><path d="M2.800 5h6.700l2 2.500h9.700v11.500H2.800z" fill="#ecb442" fill-opacity=".08" stroke="#ecb442" stroke-width="2.300" stroke-linejoin="round"/></g></svg>
<div class="t" style="top:323.65px;line-height:12px;font-size:8.6px;color:#d6d6d6;letter-spacing:0px;left:57.90px;">Scenes</div>
<svg class="r" style="left:55px;top:337px;" width="10" height="10"><g transform="translate(0.150 0.250) scale(0.3458)"><path d="M3.200 4h11l6.600 6v10H3.200z" fill="#5b98d4" fill-opacity=".22" stroke="#5b98d4" stroke-width="2.400" stroke-linejoin="round"/><path d="M13.800 4.500v6H20.500" fill="none" stroke="#5b98d4" stroke-width="1.900"/><path d="M7.500 13h8M7.500 16.800h6" stroke="#5b98d4" stroke-width="1.700"/></g></svg>
<div class="t" style="top:335.40px;line-height:12px;font-size:8.6px;color:#d6d6d6;letter-spacing:0px;left:66.90px;">Old File</div>
<svg class="r" style="left:28px;top:351px;" width="7" height="5"><g transform="translate(0.700 0.530) scale(0.4400)"><path d="M0 0h10L5 6z" fill="#a4a4a4"/></g></svg>
<svg class="r" style="left:37px;top:349px;" width="10" height="10"><g transform="translate(0.150 0.000) scale(0.3458)"><path d="M3 5.500h6.500l2 2.500H21v11H3z" fill="#5b98d4" fill-opacity=".3" stroke="#5b98d4" stroke-width="2.6" stroke-linejoin="round"/><path d="M9 11.500h7M9 15h5" stroke="#5b98d4" stroke-width="2"/></g></svg>
<div class="t" style="top:347.15px;line-height:12px;font-size:8.6px;color:#d6d6d6;letter-spacing:0px;left:48.90px;">Templates</div>
<svg class="r" style="left:46px;top:360px;" width="10" height="11"><g transform="translate(0.150 0.750) scale(0.3458)"><path d="M3.200 4h11l6.600 6v10H3.200z" fill="#5b98d4" fill-opacity=".22" stroke="#5b98d4" stroke-width="2.400" stroke-linejoin="round"/><path d="M13.800 4.500v6H20.500" fill="none" stroke="#5b98d4" stroke-width="1.900"/><path d="M7.500 13h8M7.500 16.800h6" stroke="#5b98d4" stroke-width="1.700"/></g></svg>
<div class="t" style="top:358.90px;line-height:12px;font-size:8.6px;color:#d6d6d6;letter-spacing:0px;left:57.90px;">Scene</div>
<svg class="r" style="left:46px;top:372px;" width="10" height="10"><g transform="translate(0.150 0.500) scale(0.3458)"><path d="M3.200 4h11l6.600 6v10H3.200z" fill="#dd5a64" fill-opacity=".22" stroke="#dd5a64" stroke-width="2.400" stroke-linejoin="round"/><path d="M13.800 4.500v6H20.500" fill="none" stroke="#dd5a64" stroke-width="1.900"/><path d="M7.500 13h8M7.500 16.800h6" stroke="#dd5a64" stroke-width="1.700"/></g></svg>
<div class="t" style="top:370.65px;line-height:12px;font-size:8.6px;color:#d6d6d6;letter-spacing:0px;left:57.90px;">Chapter</div>
<svg class="r" style="left:46px;top:384px;" width="10" height="10"><g transform="translate(0.150 0.250) scale(0.3458)"><path d="M3.200 4h17.600v10l-6 6H3.200z" fill="#ecb442" fill-opacity=".14" stroke="#ecb442" stroke-width="2.400" stroke-linejoin="round"/><path d="M20.800 14.500l-5.500 5.500v-5.500z" fill="#ecb442" stroke="#ecb442" stroke-width="1" stroke-linejoin="round"/><path d="M7.300 8.800h9.500M7.300 12.800h5" stroke="#ecb442" stroke-width="1.700"/></g></svg>
<div class="t" style="top:382.40px;line-height:12px;font-size:8.6px;color:#d6d6d6;letter-spacing:0px;left:57.90px;">Character Note</div>
<svg class="r" style="left:28px;top:398px;" width="7" height="5"><g transform="translate(0.700 0.530) scale(0.4400)"><path d="M0 0h10L5 6z" fill="#a4a4a4"/></g></svg>
<svg class="r" style="left:37px;top:396px;" width="10" height="10"><g transform="translate(0.150 0.000) scale(0.3458)"><path d="M6.500 7h11v14h-11z" fill="#5b98d4" fill-opacity=".35" stroke="#5b98d4" stroke-width="2.6" stroke-linejoin="round"/><path d="M4.500 5.500h15M9.500 3.500h5" stroke="#5b98d4" stroke-width="2.4"/><path d="M10 11v6M14 11v6" stroke="#5b98d4" stroke-width="1.800"/></g></svg>
<div class="t" style="top:394.15px;line-height:12px;font-size:8.6px;color:#d6d6d6;letter-spacing:0px;left:48.90px;">Trash</div>
<svg class="r" style="left:46px;top:407px;" width="10" height="11"><g transform="translate(0.150 0.750) scale(0.3458)"><path d="M3.200 4h11l6.600 6v10H3.200z" fill="#5b98d4" fill-opacity=".22" stroke="#5b98d4" stroke-width="2.400" stroke-linejoin="round"/><path d="M13.800 4.500v6H20.500" fill="none" stroke="#5b98d4" stroke-width="1.900"/><path d="M7.500 13h8M7.500 16.800h6" stroke="#5b98d4" stroke-width="1.700"/></g></svg>
<div class="t" style="top:405.90px;line-height:12px;font-size:8.6px;color:#d6d6d6;letter-spacing:0px;left:57.90px;">Delete Me!</div>
<div class="t" style="top:449.50px;line-height:12px;font-size:7.45px;color:#e4e4e4;font-weight:700;letter-spacing:0px;left:29.80px;-webkit-text-stroke:0.08px;">Label</div>
<svg class="r" style="left:60px;top:451px;" width="9" height="9"><g transform="translate(0.200 0.400) scale(0.3000)"><rect x="3.500" y="3.500" width="17" height="17" rx="2" fill="none" stroke="#7ab882" stroke-width="1.900"/><path d="M7 12.500l3.500 3.500L17.500 8.500" fill="none" stroke="#7ab882" stroke-width="2"/></g></svg>
<div class="t" style="top:449.50px;line-height:12px;font-size:7.65px;color:#d6d6d6;letter-spacing:0px;left:71.80px;-webkit-text-stroke:0.08px;">Making a Scene</div>
<div class="t" style="top:459.50px;line-height:12px;font-size:7.45px;color:#e4e4e4;font-weight:700;letter-spacing:0px;left:29.80px;-webkit-text-stroke:0.08px;">Status</div>
<svg class="r" style="left:60px;top:461px;" width="3" height="9"><g transform="translate(0.600 0.400) scale(1.0000)"><rect x="0" y="0" width="1.3" height="7.2" fill="#d8920c"/></g></svg>
<svg class="r" style="left:62px;top:461px;" width="4" height="9"><g transform="translate(0.800 0.400) scale(1.0000)"><rect x="0" y="0" width="1.3" height="7.2" fill="#d8920c"/></g></svg>
<div class="t" style="top:459.50px;line-height:12px;font-size:7.65px;color:#d6d6d6;letter-spacing:0px;left:71.80px;-webkit-text-stroke:0.08px;">1st Draft</div>
<div class="t" style="top:469.50px;line-height:12px;font-size:7.45px;color:#e4e4e4;font-weight:700;letter-spacing:0px;left:29.80px;-webkit-text-stroke:0.08px;">Class</div>
<svg class="r" style="left:60px;top:471px;" width="9" height="9"><g transform="translate(0.200 0.400) scale(0.3000)"><path d="M4.500 3.500h15v17h-15z" fill="#5b98d4" fill-opacity=".5" stroke="#5b98d4" stroke-width="2.600" stroke-linejoin="round"/><path d="M10 4.500h4.500v7.500H10z" fill="#2c3540"/><path d="M4.500 17h15" stroke="#5b98d4" stroke-width="1.600"/></g></svg>
<div class="t" style="top:469.50px;line-height:12px;font-size:7.65px;color:#d6d6d6;letter-spacing:0px;left:71.80px;-webkit-text-stroke:0.08px;">Novel</div>
<div class="t" style="top:479.50px;line-height:12px;font-size:7.45px;color:#e4e4e4;font-weight:700;letter-spacing:0px;left:29.80px;-webkit-text-stroke:0.08px;">Usage</div>
<svg class="r" style="left:60px;top:481px;" width="9" height="9"><g transform="translate(0.200 0.400) scale(0.3000)"><path d="M3.200 4h11l6.600 6v10H3.200z" fill="#5b98d4" fill-opacity=".22" stroke="#5b98d4" stroke-width="2.400" stroke-linejoin="round"/><path d="M13.800 4.500v6H20.500" fill="none" stroke="#5b98d4" stroke-width="1.900"/><path d="M7.500 13h8M7.500 16.800h6" stroke="#5b98d4" stroke-width="1.700"/></g></svg>
<div class="t" style="top:479.50px;line-height:12px;font-size:7.65px;color:#d6d6d6;letter-spacing:0px;left:71.80px;-webkit-text-stroke:0.08px;">Novel Scene</div>
<div class="r" style="left:226.20px;top:37.60px;width:1.80px;height:469.00px;background:#303030;"></div>
<div class="r" style="left:228.00px;top:37.60px;width:632.00px;height:469.00px;background:#2a2a2a;"></div>
<svg class="r" style="left:233px;top:43px;" width="9" height="10"><g transform="translate(0.400 0.850) scale(0.2917)"><path d="M12 3l5.500 11h-11z" fill="none" stroke="#5f9ad6" stroke-width="2.800"/><path d="M3 20h18" stroke="#5f9ad6" stroke-width="3"/></g></svg>
<svg class="r" style="left:245px;top:43px;" width="10" height="10"><g transform="translate(0.400 0.200) scale(0.3583)"><path d="M8.500 5.500h13M8.500 12h13M8.500 18.500h13" stroke="#5f9ad6" stroke-width="2.300"/><circle cx="3.600" cy="5.500" r="1.800" fill="#5f9ad6"/><circle cx="3.600" cy="12" r="1.800" fill="#5f9ad6"/><circle cx="3.600" cy="18.500" r="1.800" fill="#5f9ad6"/></g></svg>
<svg class="r" style="left:258px;top:43px;" width="10" height="10"><g transform="translate(0.600 0.400) scale(0.3333)"><circle cx="9.500" cy="9.500" r="6" fill="none" stroke="#5f9ad6" stroke-width="2.800"/><path d="M14 14l7 7" stroke="#5f9ad6" stroke-width="3.200"/></g></svg>
<div class="t" style="top:41.50px;line-height:12px;font-size:7.35px;color:#a2a2a2;letter-spacing:0px;left:479.70px;-webkit-text-stroke:0.08px;">Novel</div>
<div class="t" style="top:41.50px;line-height:12px;font-size:7.35px;color:#a2a2a2;letter-spacing:0px;left:502.40px;-webkit-text-stroke:0.08px;">›</div>
<div class="t" style="top:41.50px;line-height:12px;font-size:7.35px;color:#a2a2a2;letter-spacing:0px;left:508.60px;-webkit-text-stroke:0.08px;">Chapter One</div>
<div class="t" style="top:41.50px;line-height:12px;font-size:7.35px;color:#a2a2a2;letter-spacing:0px;left:554.40px;-webkit-text-stroke:0.08px;">›</div>
<div class="t" style="top:41.50px;line-height:12px;font-size:7.35px;color:#a2a2a2;letter-spacing:0px;left:560.60px;-webkit-text-stroke:0.08px;">Making a Scene</div>
<svg class="r" style="left:835px;top:43px;" width="9" height="9"><g transform="translate(0.200 0.900) scale(0.5000)"><path d="M1 4V1h3M10 1h3v3M13 10v3h-3M4 13H1v-3" fill="none" stroke="#5f9ad6" stroke-width="1.600"/></g></svg>
<svg class="r" style="left:848px;top:44px;" width="8" height="8"><g transform="translate(0.600 0.200) scale(0.6000)"><path d="M1 1l8 8M9 1l-8 8" stroke="#e2606a" stroke-width="1.700"/></g></svg>
<div class="t" style="top:61.90px;line-height:16px;font-size:14.0px;color:#5b8fc8;font-weight:700;left:311.90px;transform:scaleY(.82);">###</div>
<div class="t" style="top:61.90px;line-height:16px;font-size:11.45px;color:#6ea6dc;font-weight:700;left:340.00px;">Making a Scene</div>
<div class="t" style="top:87.50px;line-height:12px;font-size:8.6px;color:#d6d6d6;letter-spacing:0px;left:311.80px;"><span style="color:#f2777a">@pov</span><span style="color:#c4c4c4">: </span><span class="u" style="color:#cc99cc">Jane</span></div>
<div class="t" style="top:98.05px;line-height:12px;font-size:8.6px;color:#d6d6d6;letter-spacing:0px;left:311.80px;"><span style="color:#f2777a">@char</span><span style="color:#c4c4c4">: </span><span class="u" style="color:#cc99cc">John</span><span style="color:#c4c4c4">, </span><span class="u" style="color:#cc99cc">Jane</span></div>
<div class="t" style="top:108.60px;line-height:12px;font-size:8.6px;color:#d6d6d6;letter-spacing:0px;left:311.80px;"><span style="color:#f2777a">@location</span><span style="color:#c4c4c4">: </span><span class="u" style="color:#cc99cc">Earth</span></div>
<div class="t" style="top:119.15px;line-height:12px;font-size:8.6px;color:#d6d6d6;letter-spacing:0px;left:311.80px;"><span style="color:#f2777a">@mention</span><span style="color:#c4c4c4">: </span><span class="u" style="color:#cc99cc">Space</span></div>
<div class="t" style="top:139.80px;line-height:12px;font-size:8.6px;color:#d4d4d4;letter-spacing:0px;left:311.80px;">A scene is defined by a level three heading, like the one at the top of this page. The scene will be assigned to the chapter</div>
<div class="t" style="top:150.30px;line-height:12px;font-size:8.6px;color:#d4d4d4;letter-spacing:0px;left:311.80px;">preceding it in the project tree. The scene document itself doesn’t need to be a child item of the</div>
<div class="t" style="top:160.80px;line-height:12px;font-size:8.6px;color:#d4d4d4;letter-spacing:0px;left:311.80px;">chapter. Both result in the same output when the manuscript is built from the project documents.</div>
<div class="t" style="top:181.70px;line-height:12px;font-size:8.6px;color:#d4d4d4;letter-spacing:0px;left:311.80px;">Each paragraph in the scene is separated by a blank line. The text supports minimal formatting like _italic_, **bold**,</div>
<div class="t" style="top:192.20px;line-height:12px;font-size:8.6px;color:#d4d4d4;letter-spacing:0px;left:311.80px;">and <span style="color:#8c8c8c">**_</span><span style="color:#f99157;font-weight:700;font-style:italic">bold italic</span><span style="color:#8c8c8c">_**</span>. You can also <span style="color:#8c8c8c">~~</span><span style="color:#9a9a9a;text-decoration:line-through">strikethrough</span><span style="color:#8c8c8c">~~</span> text, but</div>
<div class="t" style="top:202.70px;line-height:12px;font-size:8.6px;color:#d4d4d4;letter-spacing:0px;left:311.80px;">there are some known limitations. If the formatting markers are not matched, they are ignored and shown as plain text.</div>
<div class="t" style="top:223.80px;line-height:12px;font-size:8.6px;color:#d4d4d4;letter-spacing:0px;left:311.80px;">For special formatting aside from standard markup, shortcodes can be used. These include super<span style="color:#5b9bd8">[sup]</span>script<span style="color:#5b9bd8">[/sup]</span></div>
<div class="t" style="top:234.30px;line-height:12px;font-size:8.6px;color:#d4d4d4;letter-spacing:0px;left:311.80px;">and sub<span style="color:#5b9bd8">[sub]</span>script<span style="color:#5b9bd8">[/sub]</span>, and <span style="color:#5b9bd8">[b]</span>part<span style="color:#5b9bd8">[/b]</span>ial formatting inside of words, which markdown syntax does not do.</div>
<div class="t" style="top:255.70px;line-height:12px;font-size:8.6px;color:#7c7c7c;letter-spacing:0px;left:311.80px;">Tabs are also allowed and will show up in the editor as well as in the preview, but they are ignored in the html output file.</div>
<div class="t" style="top:266.20px;line-height:12px;font-size:8.6px;color:#7c7c7c;letter-spacing:0px;left:311.80px;">Thin spaces are also supported, and can be inserted from the insert menu or by using the keyboard shortcuts listed in help.</div>
<div class="t" style="top:276.70px;line-height:12px;font-size:8.6px;color:#7c7c7c;letter-spacing:0px;left:311.80px;">The editor also supports non-breaking spaces, and the spell checker can be toggled from the tools menu at any time you like.</div>
<div class="t" style="top:297.70px;line-height:12px;font-size:8.6px;color:#7c7c7c;letter-spacing:0px;left:311.80px;">A line starting with a percent symbol is treated as a comment and is by default not rendered in the manuscript documents.</div>
<div class="t" style="top:308.20px;line-height:12px;font-size:8.6px;color:#7c7c7c;letter-spacing:0px;left:311.80px;">Dashes are inserted automatically when you type two or three hyphens, and quotes are converted to the typographic kind.</div>
<div class="t" style="top:318.70px;line-height:12px;font-size:8.6px;color:#7c7c7c;letter-spacing:0px;left:311.80px;">Paragraphs can also be aligned to the left or right, centred on the page, or indented using the alignment markers as shown.</div>
<div class="t" style="top:339.70px;line-height:12px;font-size:8.6px;color:#7c7c7c;letter-spacing:0px;left:311.80px;">Tabs are also allowed and will show up in the editor as well as in the preview, but they are ignored in the html output file.</div>
<div class="t" style="top:350.20px;line-height:12px;font-size:8.6px;color:#7c7c7c;letter-spacing:0px;left:311.80px;">Thin spaces are also supported, and can be inserted from the insert menu or by using the keyboard shortcuts listed in help.</div>
<div class="t" style="top:360.70px;line-height:12px;font-size:8.6px;color:#7c7c7c;letter-spacing:0px;left:311.80px;">The editor also supports non-breaking spaces, and the spell checker can be toggled from the tools menu at any time you like.</div>
<div class="t" style="top:371.20px;line-height:12px;font-size:8.6px;color:#7c7c7c;letter-spacing:0px;left:311.80px;">A line starting with a percent symbol is treated as a comment and is by default not rendered in the manuscript documents.</div>
<div class="t" style="top:381.70px;line-height:12px;font-size:8.6px;color:#7c7c7c;letter-spacing:0px;left:311.80px;">Dashes are inserted automatically when you type two or three hyphens, and quotes are converted to the typographic kind.</div>
<div class="t" style="top:392.20px;line-height:12px;font-size:8.6px;color:#7c7c7c;letter-spacing:0px;left:311.80px;">Paragraphs can also be aligned to the left or right, centred on the page, or indented using the alignment markers as shown.</div>
<div class="t" style="top:413.20px;line-height:12px;font-size:8.6px;color:#7c7c7c;letter-spacing:0px;left:311.80px;">Tabs are also allowed and will show up in the editor as well as in the preview, but they are ignored in the html output file.</div>
<div class="t" style="top:423.70px;line-height:12px;font-size:8.6px;color:#7c7c7c;letter-spacing:0px;left:311.80px;">Thin spaces are also supported, and can be inserted from the insert menu or by using the keyboard shortcuts listed in help.</div>
<div class="t" style="top:434.20px;line-height:12px;font-size:8.6px;color:#7c7c7c;letter-spacing:0px;left:311.80px;">The editor also supports non-breaking spaces, and the spell checker can be toggled from the tools menu at any time you like.</div>
<div class="t" style="top:454.70px;line-height:12px;font-size:8.6px;color:#7c7c7c;letter-spacing:0px;left:311.80px;">A line starting with a percent symbol is treated as a comment and is by default not rendered in the manuscript documents.</div>
<div class="t" style="top:465.20px;line-height:12px;font-size:8.6px;color:#7c7c7c;letter-spacing:0px;left:311.80px;">Dashes are inserted automatically when you type two or three hyphens, and quotes are converted to the typographic kind.</div>
</div></div>
<div class="r" style="left:109.4px;top:243.5px;width:354.0px;height:346.1px;background:#1c1c1c;border-radius:4.8px 4.8px 0 0;overflow:visible;box-shadow:0 0 2.5px rgba(0,0,0,.35);"></div>
<div class="r" style="left:109.9px;top:244.2px;width:353.0px;height:345.40000000000003px;background:#363636;border-radius:4px 4px 0 0;">
<div class="g" style="position:absolute;left:-109.9px;top:-244.2px;width:1024px;height:592px;">
<div class="r" style="left:109.90px;top:244.20px;width:353.00px;height:21.00px;background:linear-gradient(#252525,#2a2a2a);"></div>
<div class="r" style="left:109.90px;top:265.00px;width:353.00px;height:0.80px;background:#1c1c1c;"></div>
<div class="t" style="top:249.50px;line-height:12px;font-size:8.58px;color:#f0f0f0;font-weight:700;letter-spacing:0px;left:86.00px;width:400px;text-align:center;">Writing Statistics</div>
<svg class="r" style="left:449px;top:252px;" width="8" height="7"><g transform="translate(0.600 0.200) scale(0.5800)"><path d="M1 1l8 8M9 1l-8 8" stroke="#e8e8e8" stroke-width="2" fill="none"/></g></svg>
<div class="r" style="left:116.40px;top:272.40px;width:339.90px;height:153.70px;background:#2b2b2b;"></div>
<div class="r" style="left:117.10px;top:273.10px;width:338.50px;height:152.30px;background:#3e3e3e;"></div>
<div class="r" style="left:117.10px;top:273.10px;width:330.90px;height:12.20px;background:#4a4a4a;"></div>
<div class="r" style="left:117.10px;top:285.30px;width:330.90px;height:0.70px;background:#333333;"></div>
<div class="r" style="left:191.40px;top:273.10px;width:0.80px;height:12.20px;background:#3a3a3a;"></div>
<div class="r" style="left:238.40px;top:273.10px;width:0.80px;height:12.20px;background:#3a3a3a;"></div>
<div class="r" style="left:281.00px;top:273.10px;width:0.80px;height:12.20px;background:#3a3a3a;"></div>
<div class="t" style="top:274.10px;line-height:12px;font-size:8.8px;color:#d6d6d6;letter-spacing:-0.05px;left:118.50px;">Session Start</div>
<svg class="r" style="left:184px;top:277px;" width="6" height="5"><g transform="translate(0.033 0.600) scale(0.4333)"><path d="M0 6h10L5 0z" fill="#b4b4b4"/></g></svg>
<div class="t" style="top:274.10px;line-height:12px;font-size:8.8px;color:#d6d6d6;letter-spacing:-0.05px;right:786.60px;">Length</div>
<div class="t" style="top:274.10px;line-height:12px;font-size:8.8px;color:#d6d6d6;letter-spacing:-0.05px;right:744.20px;">Idle</div>
<div class="t" style="top:274.10px;line-height:12px;font-size:8.8px;color:#d6d6d6;letter-spacing:-0.05px;right:697.60px;">Words</div>
<div class="t" style="top:274.10px;line-height:12px;font-size:8.8px;color:#d6d6d6;letter-spacing:-0.05px;left:329.60px;">Histogram</div>
<div class="t" style="top:286.80px;line-height:12px;font-size:8.17px;color:#d8d8d8;font-family:'Liberation Mono',monospace;left:119.10px;">2022-06-13</div>
<div class="t" style="top:286.80px;line-height:12px;font-size:8.17px;color:#d8d8d8;font-family:'Liberation Mono',monospace;right:786.80px;">00:14:21</div>
<div class="t" style="top:286.80px;line-height:12px;font-size:8.17px;color:#d8d8d8;font-family:'Liberation Mono',monospace;right:744.00px;">40 %</div>
<div class="t" style="top:286.80px;line-height:12px;font-size:8.17px;color:#d8d8d8;font-family:'Liberation Mono',monospace;right:698.00px;">3</div>
<div class="t" style="top:298.52px;line-height:12px;font-size:8.17px;color:#d8d8d8;font-family:'Liberation Mono',monospace;left:119.10px;">2022-06-06</div>
<div class="t" style="top:298.52px;line-height:12px;font-size:8.17px;color:#d8d8d8;font-family:'Liberation Mono',monospace;right:786.80px;">00:10:16</div>
<div class="t" style="top:298.52px;line-height:12px;font-size:8.17px;color:#d8d8d8;font-family:'Liberation Mono',monospace;right:744.00px;">7 %</div>
<div class="t" style="top:298.52px;line-height:12px;font-size:8.17px;color:#d8d8d8;font-family:'Liberation Mono',monospace;right:698.00px;">4</div>
<div class="t" style="top:310.24px;line-height:12px;font-size:8.17px;color:#d8d8d8;font-family:'Liberation Mono',monospace;left:119.10px;">2022-06-05</div>
<div class="t" style="top:310.24px;line-height:12px;font-size:8.17px;color:#d8d8d8;font-family:'Liberation Mono',monospace;right:786.80px;">00:11:22</div>
<div class="t" style="top:310.24px;line-height:12px;font-size:8.17px;color:#d8d8d8;font-family:'Liberation Mono',monospace;right:744.00px;">6 %</div>
<div class="t" style="top:310.24px;line-height:12px;font-size:8.17px;color:#d8d8d8;font-family:'Liberation Mono',monospace;right:698.00px;">1,344</div>
<svg class="r" style="left:329px;top:313px;" width="120" height="7"><g transform="translate(0.800 0.240) scale(1.0000)"><rect x="0" y="0" width="117.4" height="5.1" fill="#2c98f7"/></g></svg>
<div class="t" style="top:321.96px;line-height:12px;font-size:8.17px;color:#d8d8d8;font-family:'Liberation Mono',monospace;left:119.10px;">2022-05-17</div>
<div class="t" style="top:321.96px;line-height:12px;font-size:8.17px;color:#d8d8d8;font-family:'Liberation Mono',monospace;right:786.80px;">00:13:28</div>
<div class="t" style="top:321.96px;line-height:12px;font-size:8.17px;color:#d8d8d8;font-family:'Liberation Mono',monospace;right:744.00px;">0 %</div>
<div class="t" style="top:321.96px;line-height:12px;font-size:8.17px;color:#d8d8d8;font-family:'Liberation Mono',monospace;right:698.00px;">97</div>
<svg class="r" style="left:329px;top:324px;" width="14" height="8"><g transform="translate(0.800 0.960) scale(1.0000)"><rect x="0" y="0" width="11.3878" height="5.1" fill="#2c98f7"/></g></svg>
<div class="t" style="top:333.68px;line-height:12px;font-size:8.17px;color:#d8d8d8;font-family:'Liberation Mono',monospace;left:119.10px;">2022-04-17</div>
<div class="t" style="top:333.68px;line-height:12px;font-size:8.17px;color:#d8d8d8;font-family:'Liberation Mono',monospace;right:786.80px;">00:02:18</div>
<div class="t" style="top:333.68px;line-height:12px;font-size:8.17px;color:#d8d8d8;font-family:'Liberation Mono',monospace;right:744.00px;">0 %</div>
<div class="t" style="top:333.68px;line-height:12px;font-size:8.17px;color:#d8d8d8;font-family:'Liberation Mono',monospace;right:698.00px;">18</div>
<svg class="r" style="left:329px;top:336px;" width="4" height="7"><g transform="translate(0.800 0.680) scale(1.0000)"><rect x="0" y="0" width="2.1132" height="5.1" fill="#2c98f7"/></g></svg>
<div class="t" style="top:345.40px;line-height:12px;font-size:8.17px;color:#d8d8d8;font-family:'Liberation Mono',monospace;left:119.10px;">2022-04-02</div>
<div class="t" style="top:345.40px;line-height:12px;font-size:8.17px;color:#d8d8d8;font-family:'Liberation Mono',monospace;right:786.80px;">00:07:23</div>
<div class="t" style="top:345.40px;line-height:12px;font-size:8.17px;color:#d8d8d8;font-family:'Liberation Mono',monospace;right:744.00px;">56 %</div>
<div class="t" style="top:345.40px;line-height:12px;font-size:8.17px;color:#d8d8d8;font-family:'Liberation Mono',monospace;right:698.00px;">817</div>
<svg class="r" style="left:329px;top:348px;" width="98" height="7"><g transform="translate(0.800 0.400) scale(1.0000)"><rect x="0" y="0" width="95.9158" height="5.1" fill="#2c98f7"/></g></svg>
<div class="t" style="top:357.12px;line-height:12px;font-size:8.17px;color:#d8d8d8;font-family:'Liberation Mono',monospace;left:119.10px;">2022-03-20</div>
<div class="t" style="top:357.12px;line-height:12px;font-size:8.17px;color:#d8d8d8;font-family:'Liberation Mono',monospace;right:786.80px;">00:01:13</div>
<div class="t" style="top:357.12px;line-height:12px;font-size:8.17px;color:#d8d8d8;font-family:'Liberation Mono',monospace;right:744.00px;">88 %</div>
<div class="t" style="top:357.12px;line-height:12px;font-size:8.17px;color:#d8d8d8;font-family:'Liberation Mono',monospace;right:698.00px;">2</div>
<div class="t" style="top:368.84px;line-height:12px;font-size:8.17px;color:#d8d8d8;font-family:'Liberation Mono',monospace;left:119.10px;">2022-02-20</div>
<div class="t" style="top:368.84px;line-height:12px;font-size:8.17px;color:#d8d8d8;font-family:'Liberation Mono',monospace;right:786.80px;">00:07:33</div>
<div class="t" style="top:368.84px;line-height:12px;font-size:8.17px;color:#d8d8d8;font-family:'Liberation Mono',monospace;right:744.00px;">60 %</div>
<div class="t" style="top:368.84px;line-height:12px;font-size:8.17px;color:#d8d8d8;font-family:'Liberation Mono',monospace;right:698.00px;">774</div>
<svg class="r" style="left:329px;top:371px;" width="93" height="7"><g transform="translate(0.800 0.840) scale(1.0000)"><rect x="0" y="0" width="90.86760000000001" height="5.1" fill="#2c98f7"/></g></svg>
<div class="t" style="top:380.56px;line-height:12px;font-size:8.17px;color:#d8d8d8;font-family:'Liberation Mono',monospace;left:119.10px;">2022-01-04</div>
<div class="t" style="top:380.56px;line-height:12px;font-size:8.17px;color:#d8d8d8;font-family:'Liberation Mono',monospace;right:786.80px;">00:14:03</div>
<div class="t" style="top:380.56px;line-height:12px;font-size:8.17px;color:#d8d8d8;font-family:'Liberation Mono',monospace;right:744.00px;">33 %</div>
<div class="t" style="top:380.56px;line-height:12px;font-size:8.17px;color:#d8d8d8;font-family:'Liberation Mono',monospace;right:698.00px;">82</div>
<svg class="r" style="left:329px;top:383px;" width="12" height="7"><g transform="translate(0.800 0.560) scale(1.0000)"><rect x="0" y="0" width="9.626800000000001" height="5.1" fill="#2c98f7"/></g></svg>
<div class="t" style="top:392.28px;line-height:12px;font-size:8.17px;color:#d8d8d8;font-family:'Liberation Mono',monospace;left:119.10px;">2021-12-15</div>
<div class="t" style="top:392.28px;line-height:12px;font-size:8.17px;color:#d8d8d8;font-family:'Liberation Mono',monospace;right:786.80px;">03:46:54</div>
<div class="t" style="top:392.28px;line-height:12px;font-size:8.17px;color:#d8d8d8;font-family:'Liberation Mono',monospace;right:744.00px;">100 %</div>
<div class="t" style="top:392.28px;line-height:12px;font-size:8.17px;color:#d8d8d8;font-family:'Liberation Mono',monospace;right:698.00px;">6</div>
<svg class="r" style="left:329px;top:395px;" width="3" height="7"><g transform="translate(0.800 0.280) scale(1.0000)"><rect x="0" y="0" width="0.9" height="5.1" fill="#2878c0"/></g></svg>
<div class="t" style="top:404.00px;line-height:12px;font-size:8.17px;color:#d8d8d8;font-family:'Liberation Mono',monospace;left:119.10px;">2021-11-09</div>
<div class="t" style="top:404.00px;line-height:12px;font-size:8.17px;color:#d8d8d8;font-family:'Liberation Mono',monospace;right:786.80px;">00:13:49</div>
<div class="t" style="top:404.00px;line-height:12px;font-size:8.17px;color:#d8d8d8;font-family:'Liberation Mono',monospace;right:744.00px;">90 %</div>
<div class="t" style="top:404.00px;line-height:12px;font-size:8.17px;color:#d8d8d8;font-family:'Liberation Mono',monospace;right:698.00px;">7</div>
<svg class="r" style="left:329px;top:407px;" width="3" height="7"><g transform="translate(0.800 0.000) scale(1.0000)"><rect x="0" y="0" width="0.9" height="5.1" fill="#2878c0"/></g></svg>
<div class="t" style="top:415.72px;line-height:12px;font-size:8.17px;color:#d8d8d8;font-family:'Liberation Mono',monospace;left:119.10px;">2021-10-24</div>
<div class="t" style="top:415.72px;line-height:12px;font-size:8.17px;color:#d8d8d8;font-family:'Liberation Mono',monospace;right:786.80px;">00:10:28</div>
<div class="t" style="top:415.72px;line-height:12px;font-size:8.17px;color:#d8d8d8;font-family:'Liberation Mono',monospace;right:744.00px;">59 %</div>
<div class="t" style="top:415.72px;line-height:12px;font-size:8.17px;color:#d8d8d8;font-family:'Liberation Mono',monospace;right:698.00px;">4</div>
<div class="r" style="left:448.00px;top:273.10px;width:7.60px;height:152.30px;background:#434343;"></div>
<div class="r" style="left:447.60px;top:273.10px;width:0.60px;height:152.30px;background:#363636;"></div>
<div class="r" style="left:448.30px;top:273.40px;width:7.00px;height:7.20px;background:#4c4c4c;"></div>
<svg class="r" style="left:449px;top:275px;" width="7" height="5"><g transform="translate(0.600 0.520) scale(0.4600)"><path d="M0 6h10L5 0z" fill="#a8a8a8"/></g></svg>
<div class="r" style="left:448.30px;top:417.90px;width:7.00px;height:7.20px;background:#4c4c4c;"></div>
<svg class="r" style="left:449px;top:420px;" width="7" height="4"><g transform="translate(0.600 0.220) scale(0.4600)"><path d="M0 0h10L5 6z" fill="#a8a8a8"/></g></svg>
<div class="r" style="left:448.40px;top:386.90px;width:6.90px;height:19.90px;background:#545454;"></div>
<div class="t" style="top:432.50px;line-height:12px;font-size:8.88px;color:#d6d6d6;letter-spacing:0px;right:618.80px;">Word count cap for the histogram</div>
<div class="r" style="left:410.0px;top:431.6px;width:45.4px;height:13.4px;background:#3e3e3e;border:0.7px solid #2a2a2a;border-radius:2px;box-sizing:border-box;"></div>
<div class="t" style="top:432.60px;line-height:12px;font-size:8.8px;color:#d6d6d6;letter-spacing:0px;left:412.40px;">1000</div>
<div class="r" style="left:447.60px;top:432.30px;width:7.20px;height:12.00px;background:#444444;"></div>
<svg class="r" style="left:449px;top:434px;" width="5" height="4"><g transform="translate(0.600 0.280) scale(0.3400)"><path d="M0 6h10L5 0z" fill="#b0b0b0"/></g></svg>
<svg class="r" style="left:449px;top:439px;" width="5" height="4"><g transform="translate(0.600 0.880) scale(0.3400)"><path d="M0 0h10L5 6z" fill="#b0b0b0"/></g></svg>
<div class="t" style="top:449.70px;line-height:12px;font-size:8.8px;color:#d6d6d6;letter-spacing:-0.05px;left:116.60px;">Sum Totals</div>
<div class="t" style="top:449.70px;line-height:12px;font-size:8.8px;color:#d6d6d6;letter-spacing:-0.05px;left:288.40px;">Filters</div>
<div class="r" style="left:117.4px;top:463.0px;width:167.2px;height:100.2px;background:#353535;border:0.8px solid #424242;border-radius:2px;box-sizing:border-box;"></div>
<div class="r" style="left:288.8px;top:463.0px;width:166.8px;height:100.2px;background:#353535;border:0.8px solid #424242;border-radius:2px;box-sizing:border-box;"></div>
<div class="t" style="top:469.20px;line-height:12px;font-size:8.88px;color:#d6d6d6;letter-spacing:0px;left:123.80px;">Total Time:</div>
<div class="t" style="top:469.40px;line-height:12px;font-size:8.17px;color:#d8d8d8;font-family:'Liberation Mono',monospace;right:746.70px;">4-16:48:42</div>
<div class="t" style="top:484.42px;line-height:12px;font-size:8.88px;color:#d6d6d6;letter-spacing:0px;left:123.80px;">Idle Time:</div>
<div class="t" style="top:484.62px;line-height:12px;font-size:8.17px;color:#d8d8d8;font-family:'Liberation Mono',monospace;right:746.70px;">4-04:40:16</div>
<div class="t" style="top:499.64px;line-height:12px;font-size:8.88px;color:#d6d6d6;letter-spacing:0px;left:123.80px;">Filtered Time:</div>
<div class="t" style="top:499.84px;line-height:12px;font-size:8.17px;color:#d8d8d8;font-family:'Liberation Mono',monospace;right:746.70px;">18:01:50</div>
<div class="t" style="top:514.86px;line-height:12px;font-size:8.88px;color:#d6d6d6;letter-spacing:0px;left:123.80px;">Novel Word Count:</div>
<div class="t" style="top:515.06px;line-height:12px;font-size:8.17px;color:#d8d8d8;font-family:'Liberation Mono',monospace;right:746.70px;">1,016</div>
<div class="t" style="top:530.08px;line-height:12px;font-size:8.88px;color:#d6d6d6;letter-spacing:0px;left:123.80px;">Notes Word Count:</div>
<div class="t" style="top:530.28px;line-height:12px;font-size:8.17px;color:#d8d8d8;font-family:'Liberation Mono',monospace;right:746.70px;">417</div>
<div class="t" style="top:545.30px;line-height:12px;font-size:8.88px;color:#d6d6d6;letter-spacing:0px;left:123.80px;">Total Word Count:</div>
<div class="t" style="top:545.50px;line-height:12px;font-size:8.17px;color:#d8d8d8;font-family:'Liberation Mono',monospace;right:746.70px;">1,433</div>
<div class="t" style="top:468.70px;line-height:12px;font-size:8.85px;color:#d6d6d6;letter-spacing:0px;left:295.60px;">Count novel files</div>
<svg class="r" style="left:432px;top:470px;" width="19" height="10"><g transform="translate(0.200 0.250) scale(1.0000)"><rect x="0" y="0" width="16.9" height="7.9" rx="3.95" fill="#2c98f7"/><circle cx="12.95" cy="3.95" r="3.20" fill="#fafafa"/></g></svg>
<div class="t" style="top:482.77px;line-height:12px;font-size:8.85px;color:#d6d6d6;letter-spacing:0px;left:295.60px;">Count note files</div>
<svg class="r" style="left:432px;top:484px;" width="19" height="10"><g transform="translate(0.200 0.320) scale(1.0000)"><rect x="0" y="0" width="16.9" height="7.9" rx="3.95" fill="#2c98f7"/><circle cx="12.95" cy="3.95" r="3.20" fill="#fafafa"/></g></svg>
<div class="t" style="top:496.84px;line-height:12px;font-size:8.85px;color:#d6d6d6;letter-spacing:0px;left:295.60px;">Hide zero word count</div>
<svg class="r" style="left:432px;top:498px;" width="19" height="10"><g transform="translate(0.200 0.390) scale(1.0000)"><rect x="0" y="0" width="16.9" height="7.9" rx="3.95" fill="#2c98f7"/><circle cx="12.95" cy="3.95" r="3.20" fill="#fafafa"/></g></svg>
<div class="t" style="top:510.91px;line-height:12px;font-size:8.85px;color:#d6d6d6;letter-spacing:0px;left:295.60px;">Hide negative word count</div>
<svg class="r" style="left:432px;top:512px;" width="19" height="10"><g transform="translate(0.200 0.460) scale(1.0000)"><rect x="0" y="0" width="16.9" height="7.9" rx="3.95" fill="#2c98f7"/><circle cx="12.95" cy="3.95" r="3.20" fill="#fafafa"/></g></svg>
<div class="t" style="top:524.98px;line-height:12px;font-size:8.85px;color:#d6d6d6;letter-spacing:0px;left:295.60px;">Group entries by day</div>
<svg class="r" style="left:432px;top:526px;" width="19" height="10"><g transform="translate(0.200 0.530) scale(1.0000)"><rect x="0" y="0" width="16.9" height="7.9" rx="3.95" fill="#2c98f7"/><circle cx="12.95" cy="3.95" r="3.20" fill="#fafafa"/></g></svg>
<div class="t" style="top:539.05px;line-height:12px;font-size:8.85px;color:#d6d6d6;letter-spacing:0px;left:295.60px;">Show idle time</div>
<svg class="r" style="left:432px;top:540px;" width="19" height="10"><g transform="translate(0.200 0.600) scale(1.0000)"><rect x="0" y="0" width="16.9" height="7.9" rx="3.95" fill="#484848"/><circle cx="3.95" cy="3.95" r="3.20" fill="#fafafa"/></g></svg>
<div class="r" style="left:353.4px;top:568.3px;width:51.8px;height:13.8px;background:linear-gradient(#484848,#404040);border:0.8px solid #2a2a2a;border-radius:2.5px;box-sizing:border-box;"></div>
<div class="t" style="top:570.00px;line-height:12px;font-size:8.75px;color:#d6d6d6;letter-spacing:0px;left:175.50px;width:400px;text-align:center;">Save As</div>
<svg class="r" style="left:397px;top:574px;" width="5" height="4"><g transform="translate(0.000 0.420) scale(0.3600)"><path d="M0 0h10L5 6z" fill="#a0a0a0"/></g></svg>
<div class="r" style="left:410.2px;top:568.3px;width:45.8px;height:13.8px;background:linear-gradient(#484848,#404040);border:0.8px solid #2a2a2a;border-radius:2.5px;box-sizing:border-box;"></div>
<svg class="r" style="left:417px;top:572px;" width="7" height="7"><g transform="translate(0.000 0.600) scale(0.5400)"><path d="M1 1l8 8M9 1l-8 8" stroke="#d0d0d0" stroke-width="1.500" fill="none"/></g></svg>
<div class="t" style="top:570.00px;line-height:12px;font-size:8.75px;color:#d6d6d6;letter-spacing:0px;left:426.60px;"><span class="u">C</span>lose</div>
</div></div>
<div class="r" style="left:465.7px;top:138.70000000000002px;width:557.0px;height:450.90000000000003px;background:#202020;border-radius:4.8px 4.8px 0 0;overflow:visible;box-shadow:0 0 2.5px rgba(0,0,0,.35);"></div>
<div class="r" style="left:466.2px;top:139.4px;width:556.0px;height:450.20000000000005px;background:#363636;border-radius:4px 4px 0 0;">
<div class="g" style="position:absolute;left:-466.2px;top:-139.4px;width:1024px;height:592px;">
<div class="r" style="left:466.20px;top:139.40px;width:556.00px;height:21.20px;background:linear-gradient(#3c3c3c 0,#343434 1.300px,#333333 100%);"></div>
<div class="r" style="left:466.20px;top:160.30px;width:556.00px;height:0.80px;background:#262626;"></div>
<div class="t" style="top:144.30px;line-height:12px;font-size:8.3px;color:#9a9a9a;font-weight:700;letter-spacing:0px;left:543.80px;width:400px;text-align:center;">Build Manuscript</div>
<svg class="r" style="left:1007px;top:147px;" width="8" height="7"><g transform="translate(0.600 0.200) scale(0.5600)"><path d="M1 1l8 8M9 1l-8 8" stroke="#b0b0b0" stroke-width="1.900" fill="none"/></g></svg>
<div class="t" style="top:169.00px;line-height:12px;font-size:8.3px;color:#e0e0e0;font-weight:700;letter-spacing:0px;left:473.20px;">Builds</div>
<svg class="r" style="left:598px;top:171px;" width="8" height="8"><g transform="translate(0.600 0.200) scale(0.4571)"><path d="M7 1v12M1 7h12" stroke="#80b985" stroke-width="2.300"/></g></svg>
<svg class="r" style="left:611px;top:173px;" width="8" height="4"><g transform="translate(0.900 0.900) scale(1.0000)"><rect x="0" y="0" width="5.8" height="1.15" fill="#cf666c"/></g></svg>
<svg class="r" style="left:623px;top:170px;" width="10" height="10"><g transform="translate(0.200 0.000) scale(0.3667)"><rect x="8.500" y="2.500" width="11" height="14.500" rx="2.500" fill="none" stroke="#5a8fc8" stroke-width="2.200"/><rect x="4" y="6.500" width="11" height="14.500" rx="2.500" fill="#363636" stroke="#5a8fc8" stroke-width="2.200"/></g></svg>
<svg class="r" style="left:636px;top:170px;" width="10" height="10"><g transform="translate(0.600 0.200) scale(0.3500)"><path d="M4 20l1.200-4.500L16.500 4.200l3.300 3.300L8.500 18.800z" fill="#86c98a" fill-opacity=".6" stroke="#86c98a" stroke-width="2.400" stroke-linejoin="round"/><path d="M9 11l4 4M12 8l4 4" stroke="#3e3e3e" stroke-width="1.200"/></g></svg>
<div class="r" style="left:472.70px;top:184.40px;width:173.80px;height:115.40px;background:#2c2c2c;"></div>
<div class="r" style="left:473.40px;top:185.00px;width:172.50px;height:114.20px;background:#3e3e3e;"></div>
<div class="r" style="left:473.40px;top:184.80px;width:172.50px;height:11.30px;background:#2c98f7;"></div>
<svg class="r" style="left:474px;top:186px;opacity:.25;" width="12" height="11"><g transform="translate(0.900 0.200) scale(0.4000)"><path d="M4 3.500h14v9" fill="none" stroke="#5b98d4" stroke-width="2.600"/><path d="M4 3.500v17h8" fill="none" stroke="#5b98d4" stroke-width="2.600"/><path d="M7.500 8.500h7M7.500 12.500h4" stroke="#5b98d4" stroke-width="2"/><circle cx="17" cy="17.500" r="3.600" fill="none" stroke="#5b98d4" stroke-width="2.800"/><circle cx="17" cy="17.500" r="1" fill="#5b98d4"/></g></svg>
<div class="t" style="top:184.80px;line-height:12px;font-size:8.77px;color:#ffffff;letter-spacing:0px;left:487.40px;">My Manuscript</div>
<svg class="r" style="left:474px;top:197px;" width="12" height="12"><g transform="translate(0.900 0.950) scale(0.4000)"><path d="M4 3.500h14v9" fill="none" stroke="#5b98d4" stroke-width="2.600"/><path d="M4 3.500v17h8" fill="none" stroke="#5b98d4" stroke-width="2.600"/><path d="M7.500 8.500h7M7.500 12.500h4" stroke="#5b98d4" stroke-width="2"/><circle cx="17" cy="17.500" r="3.600" fill="none" stroke="#5b98d4" stroke-width="2.800"/><circle cx="17" cy="17.500" r="1" fill="#5b98d4"/></g></svg>
<div class="t" style="top:196.55px;line-height:12px;font-size:8.77px;color:#d6d6d6;letter-spacing:0px;left:487.40px;">Default</div>
<svg class="r" style="left:474px;top:209px;" width="12" height="12"><g transform="translate(0.900 0.700) scale(0.4000)"><path d="M4 3.500h14v9" fill="none" stroke="#5b98d4" stroke-width="2.600"/><path d="M4 3.500v17h8" fill="none" stroke="#5b98d4" stroke-width="2.600"/><path d="M7.500 8.500h7M7.500 12.500h4" stroke="#5b98d4" stroke-width="2"/><circle cx="17" cy="17.500" r="3.600" fill="none" stroke="#5b98d4" stroke-width="2.800"/><circle cx="17" cy="17.500" r="1" fill="#5b98d4"/></g></svg>
<div class="t" style="top:208.30px;line-height:12px;font-size:8.77px;color:#d6d6d6;letter-spacing:0px;left:487.40px;">Everything</div>
<svg class="r" style="left:474px;top:221px;" width="12" height="12"><g transform="translate(0.900 0.450) scale(0.4000)"><path d="M4 3.500h14v9" fill="none" stroke="#5b98d4" stroke-width="2.600"/><path d="M4 3.500v17h8" fill="none" stroke="#5b98d4" stroke-width="2.600"/><path d="M7.500 8.500h7M7.500 12.500h4" stroke="#5b98d4" stroke-width="2"/><circle cx="17" cy="17.500" r="3.600" fill="none" stroke="#5b98d4" stroke-width="2.800"/><circle cx="17" cy="17.500" r="1" fill="#5b98d4"/></g></svg>
<div class="t" style="top:220.05px;line-height:12px;font-size:8.77px;color:#d6d6d6;letter-spacing:0px;left:487.40px;">Markdown</div>
<div class="r" style="left:556.20px;top:301.00px;width:1.00px;height:0.90px;background:#8a8a8a;"></div>
<div class="r" style="left:558.40px;top:301.00px;width:1.00px;height:0.90px;background:#8a8a8a;"></div>
<div class="r" style="left:560.60px;top:301.00px;width:1.00px;height:0.90px;background:#8a8a8a;"></div>
<div class="r" style="left:562.80px;top:301.00px;width:1.00px;height:0.90px;background:#8a8a8a;"></div>
<div class="r" style="left:565.00px;top:301.00px;width:1.00px;height:0.90px;background:#8a8a8a;"></div>
<div class="t" style="top:305.00px;line-height:12px;font-size:8.7px;color:#3c9cf0;letter-spacing:0px;left:478.00px;">Details</div>
<div class="t" style="top:305.00px;line-height:12px;font-size:8.9px;color:#d6d6d6;letter-spacing:0px;left:514.70px;">Outline</div>
<div class="r" style="left:472.70px;top:317.10px;width:173.80px;height:227.40px;background:#2c2c2c;"></div>
<div class="r" style="left:473.40px;top:317.70px;width:172.50px;height:226.20px;background:#3e3e3e;"></div>
<div class="r" style="left:473.40px;top:317.70px;width:172.50px;height:12.30px;background:#4a4a4a;"></div>
<div class="r" style="left:473.40px;top:330.00px;width:172.50px;height:0.70px;background:#343434;"></div>
<div class="r" style="left:567.60px;top:317.70px;width:0.80px;height:12.30px;background:#3a3a3a;"></div>
<div class="t" style="top:318.90px;line-height:12px;font-size:8.75px;color:#d6d6d6;letter-spacing:0px;left:474.60px;">Setting</div>
<div class="t" style="top:318.90px;line-height:12px;font-size:8.75px;color:#d6d6d6;letter-spacing:0px;left:570.00px;">Value</div>
<div class="t" style="top:331.30px;line-height:12px;font-size:8.66px;color:#d6d6d6;letter-spacing:0px;left:483.80px;">Name</div>
<div class="t" style="top:331.30px;line-height:12px;font-size:8.66px;color:#d6d6d6;letter-spacing:0px;left:570.40px;">My Manuscript</div>
<svg class="r" style="left:475px;top:346px;" width="6" height="4"><g transform="translate(0.600 0.290) scale(0.4200)"><path d="M0 0h10L5 6z" fill="#a4a4a4"/></g></svg>
<div class="t" style="top:341.85px;line-height:12px;font-size:8.66px;color:#d6d6d6;letter-spacing:0px;left:483.80px;">Selection</div>
<div class="t" style="top:352.40px;line-height:12px;font-size:8.66px;color:#d6d6d6;letter-spacing:0px;left:492.80px;">Novel</div>
<svg class="r" style="left:570px;top:352px;" width="12" height="12"><g transform="translate(0.100 0.600) scale(1.0000)"><circle cx="5" cy="5" r="3.500" fill="none" stroke="#5a9ce6" stroke-width="1.050"/><circle cx="5" cy="5" r="2.050" fill="#5a9ce6"/></g></svg>
<div class="t" style="top:362.95px;line-height:12px;font-size:8.66px;color:#d6d6d6;letter-spacing:0px;left:492.80px;">Sequel</div>
<svg class="r" style="left:570px;top:363px;" width="12" height="12"><g transform="translate(0.100 0.150) scale(1.0000)"><circle cx="5" cy="5" r="3.500" fill="none" stroke="#5a9ce6" stroke-width="1.050"/><circle cx="5" cy="5" r="2.050" fill="#5a9ce6"/></g></svg>
<div class="t" style="top:373.50px;line-height:12px;font-size:8.66px;color:#d6d6d6;letter-spacing:0px;left:492.80px;">Characters</div>
<svg class="r" style="left:570px;top:373px;" width="12" height="12"><g transform="translate(0.100 0.700) scale(1.0000)"><circle cx="5" cy="5" r="3.500" fill="none" stroke="#5a9ce6" stroke-width="1.050"/><circle cx="5" cy="5" r="2.050" fill="#5a9ce6"/></g></svg>
<div class="t" style="top:384.05px;line-height:12px;font-size:8.66px;color:#d6d6d6;letter-spacing:0px;left:492.80px;">Locations</div>
<svg class="r" style="left:570px;top:384px;" width="12" height="12"><g transform="translate(0.100 0.250) scale(1.0000)"><circle cx="5" cy="5" r="3.500" fill="none" stroke="#5a9ce6" stroke-width="1.050"/></g></svg>
<svg class="r" style="left:475px;top:399px;" width="6" height="4"><g transform="translate(0.600 0.040) scale(0.4200)"><path d="M0 0h10L5 6z" fill="#a4a4a4"/></g></svg>
<div class="t" style="top:394.60px;line-height:12px;font-size:8.66px;color:#d6d6d6;letter-spacing:0px;left:483.80px;">Headings</div>
<div class="t" style="top:405.15px;line-height:12px;font-size:8.66px;color:#d6d6d6;letter-spacing:0px;left:492.80px;">Partition Format</div>
<div class="t" style="top:405.15px;line-height:12px;font-size:8.66px;color:#d6d6d6;letter-spacing:0px;left:570.40px;">Title</div>
<div class="t" style="top:415.70px;line-height:12px;font-size:8.66px;color:#d6d6d6;letter-spacing:0px;left:492.80px;">Chapter Format</div>
<div class="t" style="top:415.70px;line-height:12px;font-size:8.66px;color:#d6d6d6;letter-spacing:0px;left:570.40px;">Chapter 1: Point …</div>
<div class="t" style="top:426.25px;line-height:12px;font-size:8.66px;color:#d6d6d6;letter-spacing:0px;left:492.80px;">Unnumbered Fo…</div>
<div class="t" style="top:426.25px;line-height:12px;font-size:8.66px;color:#d6d6d6;letter-spacing:0px;left:570.40px;">Title</div>
<div class="t" style="top:436.80px;line-height:12px;font-size:8.66px;color:#d6d6d6;letter-spacing:0px;left:492.80px;">Scene Format</div>
<div class="t" style="top:436.80px;line-height:12px;font-size:8.66px;color:#d6d6d6;letter-spacing:0px;left:570.40px;">Scene 1.1: Title</div>
<div class="t" style="top:447.35px;line-height:12px;font-size:8.66px;color:#d6d6d6;letter-spacing:0px;left:492.80px;">Alt. Scene Format</div>
<div class="t" style="top:447.35px;line-height:12px;font-size:8.66px;color:#d6d6d6;letter-spacing:0px;left:570.40px;">Scene 1.1: Title</div>
<div class="t" style="top:457.90px;line-height:12px;font-size:8.66px;color:#d6d6d6;letter-spacing:0px;left:492.80px;">Section Format</div>
<svg class="r" style="left:476px;top:471px;" width="4" height="7"><g transform="translate(0.440 0.850) scale(0.4200)"><path d="M0 0v10l6-5z" fill="#a4a4a4"/></g></svg>
<div class="t" style="top:468.45px;line-height:12px;font-size:8.66px;color:#d6d6d6;letter-spacing:0px;left:483.80px;">Text Content</div>
<div class="r" style="left:647.90px;top:370.60px;width:0.90px;height:1.00px;background:#8a8a8a;"></div>
<div class="r" style="left:647.90px;top:372.80px;width:0.90px;height:1.00px;background:#8a8a8a;"></div>
<div class="r" style="left:647.90px;top:375.00px;width:0.90px;height:1.00px;background:#8a8a8a;"></div>
<div class="r" style="left:647.90px;top:377.20px;width:0.90px;height:1.00px;background:#8a8a8a;"></div>
<div class="r" style="left:647.90px;top:379.40px;width:0.90px;height:1.00px;background:#8a8a8a;"></div>
<div class="r" style="left:472.9px;top:548.2px;width:85.0px;height:15.6px;background:linear-gradient(#565c66,#474b53);border:1.1px solid #4a8ad0;border-radius:2.500px;box-sizing:border-box;"></div>
<div class="t" style="top:550.90px;line-height:12px;font-size:8.75px;color:#d6d6d6;letter-spacing:0px;left:315.40px;width:400px;text-align:center;">Preview</div>
<div class="r" style="left:562.0px;top:549.0px;width:84.0px;height:14.0px;background:linear-gradient(#4a4a4a,#414141);border:0.8px solid #2a2a2a;border-radius:2.500px;box-sizing:border-box;"></div>
<div class="t" style="top:550.90px;line-height:12px;font-size:8.75px;color:#d6d6d6;letter-spacing:0px;left:404.00px;width:400px;text-align:center;">Print</div>
<div class="r" style="left:472.9px;top:568.0px;width:85.0px;height:13.6px;background:linear-gradient(#4a4a4a,#414141);border:0.8px solid #2a2a2a;border-radius:2.500px;box-sizing:border-box;"></div>
<div class="t" style="top:569.70px;line-height:12px;font-size:8.75px;color:#d6d6d6;letter-spacing:0px;left:315.40px;width:400px;text-align:center;">Build</div>
<div class="r" style="left:562.0px;top:568.0px;width:84.0px;height:13.6px;background:linear-gradient(#4a4a4a,#414141);border:0.8px solid #2a2a2a;border-radius:2.500px;box-sizing:border-box;"></div>
<div class="t" style="top:569.70px;line-height:12px;font-size:8.75px;color:#d6d6d6;letter-spacing:0px;left:404.00px;width:400px;text-align:center;">Close</div>
<div class="r" style="left:649.80px;top:168.00px;width:356.20px;height:341.80px;background:#ffffff;"></div>
<div class="r" style="left:649.80px;top:168.00px;width:356.20px;height:21.90px;background:#ffffc0;"></div>
<div class="t" style="top:168.55px;line-height:12px;font-size:7.45px;color:#141414;font-weight:700;letter-spacing:0px;left:627.90px;width:400px;text-align:center;-webkit-text-stroke:0.08px;">My Manuscript</div>
<div class="t" style="top:177.75px;line-height:12px;font-size:7.55px;color:#202020;letter-spacing:0px;left:627.90px;width:400px;text-align:center;-webkit-text-stroke:0.08px;">Built: 2 minutes ago</div>
<div class="t" style="top:200.75px;line-height:26px;font-size:20.85px;color:#0a0a0a;font-weight:700;left:628.30px;width:400px;text-align:center;">My Novel</div>
<div class="t" style="top:233.75px;line-height:12px;font-size:8.1px;color:#0a0a0a;font-weight:700;letter-spacing:0px;left:627.90px;width:400px;text-align:center;">By Jane Smith</div>
<div class="t" style="top:251.75px;line-height:12px;font-size:8.8px;color:#141414;letter-spacing:0px;left:627.90px;width:400px;text-align:center;">This is the title page. It should be the first document of the project.</div>
<div class="t" style="top:268.75px;line-height:12px;font-size:8.86px;color:#141414;letter-spacing:0px;left:627.90px;width:400px;text-align:center;">Word Count: 934</div>
<div class="r" style="left:673.00px;top:292.20px;width:309.20px;height:7.90px;background:#e2e2e2;"></div>
<div class="t" style="top:290.05px;line-height:12px;font-size:6.2px;color:#222;letter-spacing:0px;left:627.90px;width:400px;text-align:center;-webkit-text-stroke:0.08px;">New Page</div>
<div class="t" style="top:355.05px;line-height:12px;font-size:8.66px;color:#141414;letter-spacing:0px;left:673.00px;">This is a plain page with some text on it.</div>
<div class="t" style="left:698.8px;top:372.6px;width:283.4px;white-space:normal;text-align:justify;text-align-last:justify;font-size:8.72px;line-height:12px;color:#141414;">If you want the text to start on a fresh page, add the [newpage] code</div>
<div class="t" style="left:673px;top:384.8px;width:309.2px;white-space:normal;text-align:justify;text-align-last:justify;font-size:8.72px;line-height:12px;color:#141414;">above the text. You can also add empty paragraphs with the [vspace] code. The</div>
<div class="t" style="top:396.85px;line-height:12px;font-size:8.72px;color:#141414;letter-spacing:0px;left:673.00px;">above code adds two empty paragraphs before the text starts.</div>
<div class="r" style="left:673.00px;top:420.20px;width:309.20px;height:8.10px;background:#e2e2e2;"></div>
<div class="t" style="top:418.15px;line-height:12px;font-size:6.2px;color:#222;letter-spacing:0px;left:627.90px;width:400px;text-align:center;-webkit-text-stroke:0.08px;">New Page</div>
<div class="t" style="top:462.75px;line-height:26px;font-size:21.5px;color:#4271ae;left:627.90px;width:400px;text-align:center;-webkit-text-stroke:0.75px #4271ae;">Part One</div>
<div class="t" style="top:496.55px;line-height:12px;font-size:8.8px;color:#141414;letter-spacing:0px;left:627.90px;width:400px;text-align:center;">In the beginning …</div>
<div class="r" style="left:1006.00px;top:168.00px;width:8.20px;height:341.80px;background:#434343;"></div>
<div class="r" style="left:1006.40px;top:168.30px;width:7.50px;height:7.50px;background:#4c4c4c;"></div>
<svg class="r" style="left:1007px;top:170px;" width="7" height="5"><g transform="translate(0.800 0.620) scale(0.4600)"><path d="M0 6h10L5 0z" fill="#a8a8a8"/></g></svg>
<div class="r" style="left:1006.40px;top:502.00px;width:7.50px;height:7.50px;background:#4c4c4c;"></div>
<svg class="r" style="left:1007px;top:504px;" width="7" height="5"><g transform="translate(0.800 0.420) scale(0.4600)"><path d="M0 0h10L5 6z" fill="#a8a8a8"/></g></svg>
<div class="r" style="left:1006.50px;top:191.30px;width:7.30px;height:31.60px;background:#545454;"></div>
<svg class="r" style="left:652px;top:519px;" width="5" height="4"><g transform="translate(0.400 0.020) scale(0.3600)"><path d="M0 0h10L5 6z" fill="#a4a4a4"/></g></svg>
<div class="t" style="top:513.80px;line-height:12px;font-size:7.4px;color:#d6d6d6;letter-spacing:0px;left:663.00px;-webkit-text-stroke:0.08px;">Words</div>
<div class="t" style="top:513.80px;line-height:12px;font-size:7.4px;color:#d6d6d6;letter-spacing:0px;right:271.80px;-webkit-text-stroke:0.08px;">1,239</div>
<div class="t" style="top:513.80px;line-height:12px;font-size:7.4px;color:#d6d6d6;letter-spacing:0px;left:770.90px;-webkit-text-stroke:0.08px;">Characters</div>
<div class="t" style="top:513.80px;line-height:12px;font-size:7.4px;color:#d6d6d6;letter-spacing:0px;right:109.20px;-webkit-text-stroke:0.08px;">6,832</div>
<div class="t" style="top:525.46px;line-height:12px;font-size:7.4px;color:#d6d6d6;letter-spacing:0px;left:663.00px;-webkit-text-stroke:0.08px;">Words in Headings</div>
<div class="t" style="top:525.46px;line-height:12px;font-size:7.4px;color:#d6d6d6;letter-spacing:0px;right:271.80px;-webkit-text-stroke:0.08px;">51</div>
<div class="t" style="top:525.46px;line-height:12px;font-size:7.4px;color:#d6d6d6;letter-spacing:0px;left:770.90px;-webkit-text-stroke:0.08px;">Characters in Headings</div>
<div class="t" style="top:525.46px;line-height:12px;font-size:7.4px;color:#d6d6d6;letter-spacing:0px;right:109.20px;-webkit-text-stroke:0.08px;">275</div>
<div class="t" style="top:537.12px;line-height:12px;font-size:7.4px;color:#d6d6d6;letter-spacing:0px;left:663.00px;-webkit-text-stroke:0.08px;">Words in Text</div>
<div class="t" style="top:537.12px;line-height:12px;font-size:7.4px;color:#d6d6d6;letter-spacing:0px;right:271.80px;-webkit-text-stroke:0.08px;">934</div>
<div class="t" style="top:537.12px;line-height:12px;font-size:7.4px;color:#d6d6d6;letter-spacing:0px;left:770.90px;-webkit-text-stroke:0.08px;">Characters in Text</div>
<div class="t" style="top:537.12px;line-height:12px;font-size:7.4px;color:#d6d6d6;letter-spacing:0px;right:109.20px;-webkit-text-stroke:0.08px;">5,144</div>
<div class="t" style="top:548.78px;line-height:12px;font-size:7.4px;color:#d6d6d6;letter-spacing:0px;left:770.90px;-webkit-text-stroke:0.08px;">Characters, No Spaces</div>
<div class="t" style="top:548.78px;line-height:12px;font-size:7.4px;color:#d6d6d6;letter-spacing:0px;right:109.20px;-webkit-text-stroke:0.08px;">5,669</div>
<div class="t" style="top:560.44px;line-height:12px;font-size:7.4px;color:#d6d6d6;letter-spacing:0px;left:663.00px;-webkit-text-stroke:0.08px;">Headings</div>
<div class="t" style="top:560.44px;line-height:12px;font-size:7.4px;color:#d6d6d6;letter-spacing:0px;right:271.80px;-webkit-text-stroke:0.08px;">15</div>
<div class="t" style="top:560.44px;line-height:12px;font-size:7.4px;color:#d6d6d6;letter-spacing:0px;left:770.90px;-webkit-text-stroke:0.08px;">Characters in Headings, No Spaces</div>
<div class="t" style="top:560.44px;line-height:12px;font-size:7.4px;color:#d6d6d6;letter-spacing:0px;right:109.20px;-webkit-text-stroke:0.08px;">239</div>
<div class="t" style="top:572.10px;line-height:12px;font-size:7.4px;color:#d6d6d6;letter-spacing:0px;left:663.00px;-webkit-text-stroke:0.08px;">Paragraphs</div>
<div class="t" style="top:572.10px;line-height:12px;font-size:7.4px;color:#d6d6d6;letter-spacing:0px;right:271.80px;-webkit-text-stroke:0.08px;">36</div>
<div class="t" style="top:572.10px;line-height:12px;font-size:7.4px;color:#d6d6d6;letter-spacing:0px;left:770.90px;-webkit-text-stroke:0.08px;">Characters in Text, No Spaces</div>
<div class="t" style="top:572.10px;line-height:12px;font-size:7.4px;color:#d6d6d6;letter-spacing:0px;right:109.20px;-webkit-text-stroke:0.08px;">4,240</div>
<div class="t" style="top:514.40px;line-height:12px;font-size:8.37px;color:#d6d6d6;letter-spacing:0px;left:921.60px;">Show Page Breaks</div>
<svg class="r" style="left:997px;top:515px;" width="19" height="10"><g transform="translate(0.400 0.950) scale(1.0000)"><rect x="0" y="0" width="16.9" height="7.9" rx="3.95" fill="#2c98f7"/><circle cx="12.95" cy="3.95" r="3.20" fill="#fafafa"/></g></svg>
<div class="r" style="left:1018.60px;top:586.20px;width:0.90px;height:0.90px;background:#7a7a7a;"></div>
<div class="r" style="left:1016.60px;top:586.20px;width:0.90px;height:0.90px;background:#7a7a7a;"></div>
<div class="r" style="left:1018.60px;top:584.20px;width:0.90px;height:0.90px;background:#7a7a7a;"></div>
<div class="r" style="left:1014.60px;top:586.20px;width:0.90px;height:0.90px;background:#7a7a7a;"></div>
<div class="r" style="left:1018.60px;top:582.20px;width:0.90px;height:0.90px;background:#7a7a7a;"></div>
<div class="r" style="left:1016.60px;top:584.20px;width:0.90px;height:0.90px;background:#7a7a7a;"></div>
</div></div>
</body></html>
